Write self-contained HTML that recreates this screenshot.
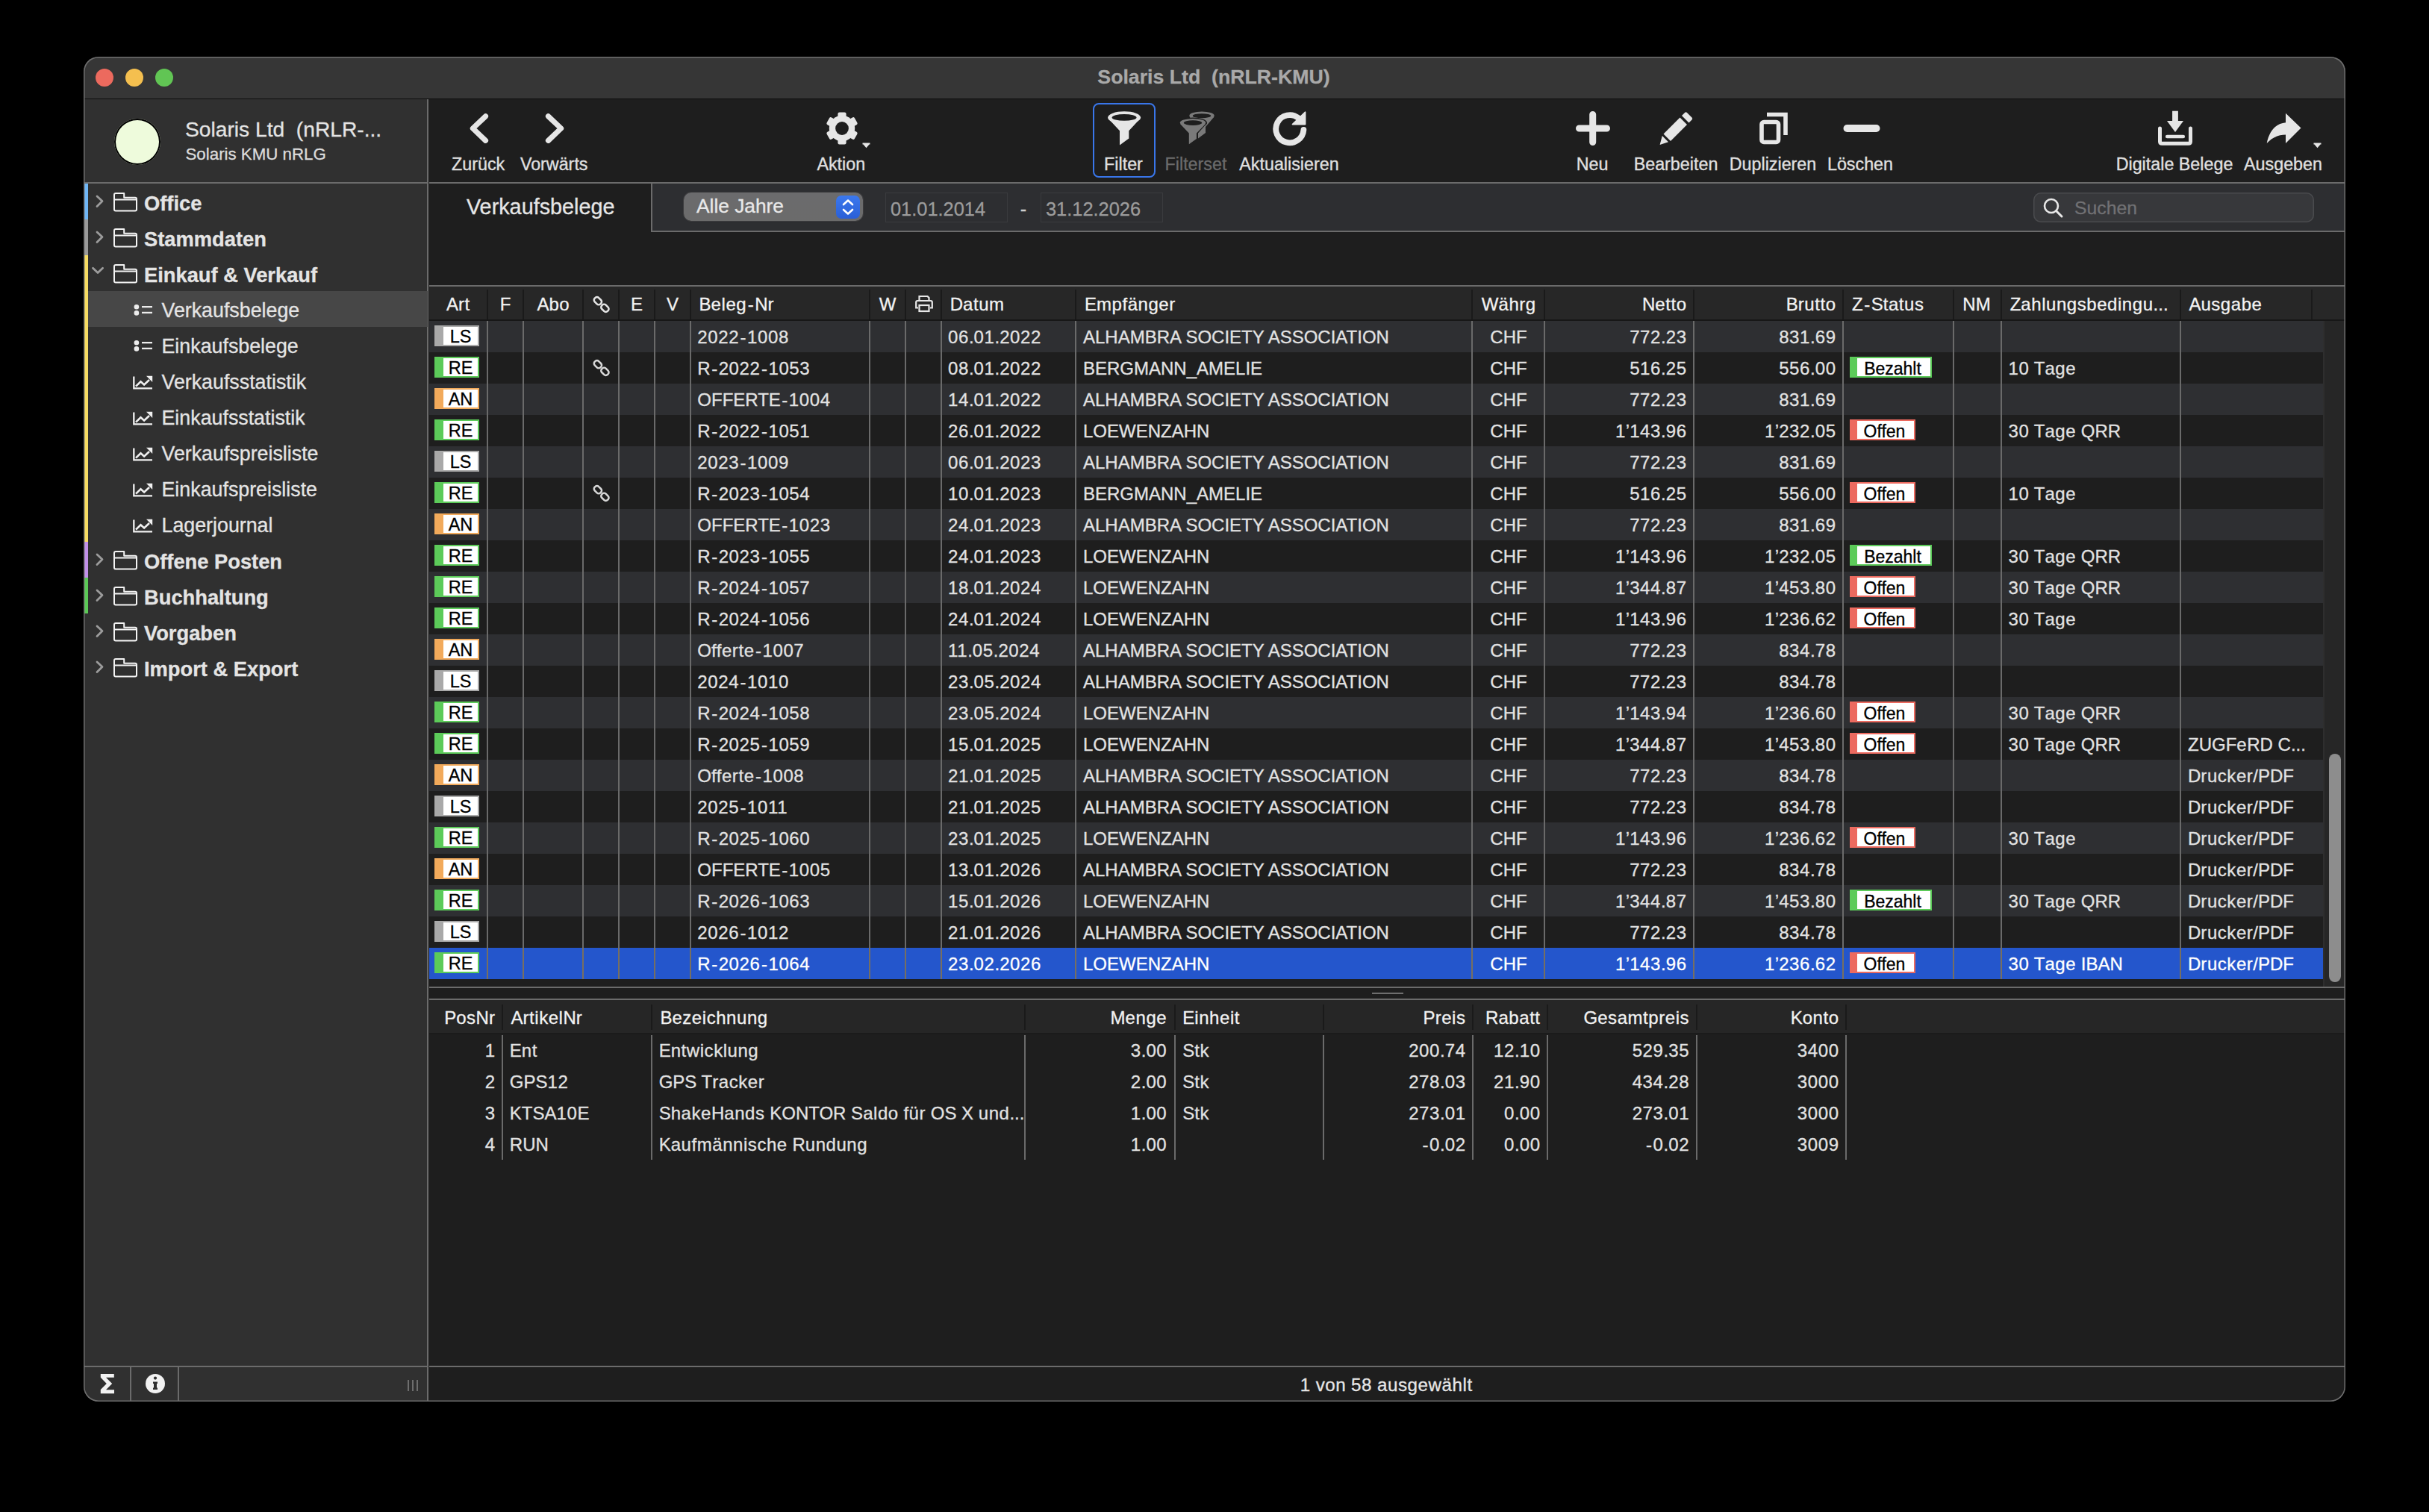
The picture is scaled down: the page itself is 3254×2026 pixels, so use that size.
<!DOCTYPE html><html><head><meta charset="utf-8"><title>Solaris Ltd (nRLR-KMU)</title><style>
html,body{margin:0;padding:0;background:#000;width:3254px;height:2026px;overflow:hidden}
body{position:relative;font-family:"Liberation Sans",sans-serif}
.r{position:absolute}
.t{position:absolute;white-space:nowrap;line-height:1;-webkit-text-stroke:0.3px currentColor}
</style></head><body>
<div class="r" style="left:112px;top:76px;width:3030px;height:1802px;background:#1e1e1e;border-radius:20px;overflow:hidden;"></div>
<div class="r" style="left:112px;top:76px;width:3030px;height:56px;background:#363636;border-radius:20px 20px 0 0;"></div>
<div class="r" style="left:128px;top:92px;width:24px;height:24px;background:#ec6a5e;border-radius:50%;"></div>
<div class="r" style="left:168px;top:92px;width:24px;height:24px;background:#f4bf4f;border-radius:50%;"></div>
<div class="r" style="left:208px;top:92px;width:24px;height:24px;background:#61c554;border-radius:50%;"></div>
<div class="t" style="left:126.0px;width:3000px;text-align:center;top:89.6px;font-size:26.7px;font-weight:700;color:#a9a9a9;">Solaris Ltd&nbsp; (nRLR-KMU)</div>
<div class="r" style="left:112px;top:132px;width:461px;height:1746px;background:#303030;border-radius:0 0 0 20px;"></div>
<div class="r" style="left:572px;top:132px;width:2px;height:1746px;background:#6b6b6b;"></div>
<div class="r" style="left:152.7px;top:158.5px;width:62.70000000000002px;height:62.69999999999999px;background:#eefbdc;border-radius:50%;box-shadow:0 0 0 2px #000 inset;"></div>
<div class="t" style="left:248.0px;top:158.7px;font-size:28.2px;font-weight:400;color:#e3e3e3;">Solaris Ltd&nbsp; (nRLR-...</div>
<div class="t" style="left:248.5px;top:196.1px;font-size:22.3px;font-weight:400;color:#dcdcdc;">Solaris KMU nRLG</div>
<div class="r" style="left:112px;top:244px;width:461px;height:2px;background:#6b6b6b;"></div>
<div class="r" style="left:112px;top:246px;width:6px;height:48px;background:#6fb6f6;"></div>
<div class="r" style="left:112px;top:294px;width:6px;height:48px;background:#9a9a9a;"></div>
<div class="r" style="left:112px;top:342px;width:6px;height:384px;background:#f7dc62;"></div>
<div class="r" style="left:112px;top:726px;width:6px;height:48px;background:#c190e8;"></div>
<div class="r" style="left:112px;top:774px;width:6px;height:48px;background:#5bc856;"></div>
<div class="r" style="left:118px;top:390px;width:455px;height:48px;background:#474747;"></div>
<svg class="r" style="left:125px;top:260px" width="18" height="22" viewBox="0 0 18 22"><path d="M5 3 L12 9.6 L5 16.4" fill="none" stroke="#9c9c9c" stroke-width="2.8" stroke-linecap="round" stroke-linejoin="round"/></svg>
<svg class="r" style="left:151px;top:257px" width="34" height="28" viewBox="0 0 34 28"><path d="M2 4 Q2 2 4 2 H15.2 V7.8 H30 Q32 7.8 32 9.8 V23.5 Q32 25.5 30 25.5 H4 Q2 25.5 2 23.5 Z M2 10.4 H32" fill="none" stroke="#f4f4f4" stroke-width="2" stroke-linejoin="round"/></svg>
<div class="t" style="left:193.0px;top:258.9px;font-size:27.3px;font-weight:700;color:#e4e4e4;">Office</div>
<svg class="r" style="left:125px;top:308px" width="18" height="22" viewBox="0 0 18 22"><path d="M5 3 L12 9.6 L5 16.4" fill="none" stroke="#9c9c9c" stroke-width="2.8" stroke-linecap="round" stroke-linejoin="round"/></svg>
<svg class="r" style="left:151px;top:305px" width="34" height="28" viewBox="0 0 34 28"><path d="M2 4 Q2 2 4 2 H15.2 V7.8 H30 Q32 7.8 32 9.8 V23.5 Q32 25.5 30 25.5 H4 Q2 25.5 2 23.5 Z M2 10.4 H32" fill="none" stroke="#f4f4f4" stroke-width="2" stroke-linejoin="round"/></svg>
<div class="t" style="left:193.0px;top:306.9px;font-size:27.3px;font-weight:700;color:#e4e4e4;">Stammdaten</div>
<svg class="r" style="left:121px;top:356px" width="20" height="20" viewBox="0 0 20 20"><path d="M3.5 3.2 L10 9.6 L16.6 3.2" fill="none" stroke="#9c9c9c" stroke-width="2.8" stroke-linecap="round" stroke-linejoin="round"/></svg>
<svg class="r" style="left:151px;top:353px" width="34" height="28" viewBox="0 0 34 28"><path d="M2 4 Q2 2 4 2 H15.2 V7.8 H30 Q32 7.8 32 9.8 V23.5 Q32 25.5 30 25.5 H4 Q2 25.5 2 23.5 Z M2 10.4 H32" fill="none" stroke="#f4f4f4" stroke-width="2" stroke-linejoin="round"/></svg>
<div class="t" style="left:193.0px;top:354.9px;font-size:27.3px;font-weight:700;color:#e4e4e4;">Einkauf &amp; Verkauf</div>
<svg class="r" style="left:178px;top:405px" width="28" height="20" viewBox="0 0 28 20"><circle cx="4.9" cy="6.3" r="3.3" fill="#ececec"/><circle cx="4.9" cy="14.4" r="3.3" fill="#ececec"/><rect x="12" y="5" width="14" height="2.3" fill="#ececec"/><rect x="12" y="12.8" width="14" height="2.3" fill="#ececec"/></svg>
<div class="t" style="left:216.5px;top:403.1px;font-size:26.8px;font-weight:400;color:#e4e4e4;">Verkaufsbelege</div>
<svg class="r" style="left:178px;top:453px" width="28" height="20" viewBox="0 0 28 20"><circle cx="4.9" cy="6.3" r="3.3" fill="#ececec"/><circle cx="4.9" cy="14.4" r="3.3" fill="#ececec"/><rect x="12" y="5" width="14" height="2.3" fill="#ececec"/><rect x="12" y="12.8" width="14" height="2.3" fill="#ececec"/></svg>
<div class="t" style="left:216.5px;top:451.1px;font-size:26.8px;font-weight:400;color:#e4e4e4;">Einkaufsbelege</div>
<svg class="r" style="left:177px;top:500px" width="30" height="24" viewBox="0 0 30 24"><path d="M2.3 4.4 V20.3 H27" fill="none" stroke="#f0f0f0" stroke-width="2.3"/><path d="M5 17.6 L11.5 11.3 L16.1 15.5 L23 9" fill="none" stroke="#f0f0f0" stroke-width="2.6"/><path d="M19 3.8 H27.2 V12 Z" fill="#f0f0f0"/></svg>
<div class="t" style="left:216.5px;top:499.1px;font-size:26.8px;font-weight:400;color:#e4e4e4;">Verkaufsstatistik</div>
<svg class="r" style="left:177px;top:548px" width="30" height="24" viewBox="0 0 30 24"><path d="M2.3 4.4 V20.3 H27" fill="none" stroke="#f0f0f0" stroke-width="2.3"/><path d="M5 17.6 L11.5 11.3 L16.1 15.5 L23 9" fill="none" stroke="#f0f0f0" stroke-width="2.6"/><path d="M19 3.8 H27.2 V12 Z" fill="#f0f0f0"/></svg>
<div class="t" style="left:216.5px;top:547.1px;font-size:26.8px;font-weight:400;color:#e4e4e4;">Einkaufsstatistik</div>
<svg class="r" style="left:177px;top:596px" width="30" height="24" viewBox="0 0 30 24"><path d="M2.3 4.4 V20.3 H27" fill="none" stroke="#f0f0f0" stroke-width="2.3"/><path d="M5 17.6 L11.5 11.3 L16.1 15.5 L23 9" fill="none" stroke="#f0f0f0" stroke-width="2.6"/><path d="M19 3.8 H27.2 V12 Z" fill="#f0f0f0"/></svg>
<div class="t" style="left:216.5px;top:595.1px;font-size:26.8px;font-weight:400;color:#e4e4e4;">Verkaufspreisliste</div>
<svg class="r" style="left:177px;top:644px" width="30" height="24" viewBox="0 0 30 24"><path d="M2.3 4.4 V20.3 H27" fill="none" stroke="#f0f0f0" stroke-width="2.3"/><path d="M5 17.6 L11.5 11.3 L16.1 15.5 L23 9" fill="none" stroke="#f0f0f0" stroke-width="2.6"/><path d="M19 3.8 H27.2 V12 Z" fill="#f0f0f0"/></svg>
<div class="t" style="left:216.5px;top:643.1px;font-size:26.8px;font-weight:400;color:#e4e4e4;">Einkaufspreisliste</div>
<svg class="r" style="left:177px;top:692px" width="30" height="24" viewBox="0 0 30 24"><path d="M2.3 4.4 V20.3 H27" fill="none" stroke="#f0f0f0" stroke-width="2.3"/><path d="M5 17.6 L11.5 11.3 L16.1 15.5 L23 9" fill="none" stroke="#f0f0f0" stroke-width="2.6"/><path d="M19 3.8 H27.2 V12 Z" fill="#f0f0f0"/></svg>
<div class="t" style="left:216.5px;top:691.1px;font-size:26.8px;font-weight:400;color:#e4e4e4;">Lagerjournal</div>
<svg class="r" style="left:125px;top:740px" width="18" height="22" viewBox="0 0 18 22"><path d="M5 3 L12 9.6 L5 16.4" fill="none" stroke="#9c9c9c" stroke-width="2.8" stroke-linecap="round" stroke-linejoin="round"/></svg>
<svg class="r" style="left:151px;top:737px" width="34" height="28" viewBox="0 0 34 28"><path d="M2 4 Q2 2 4 2 H15.2 V7.8 H30 Q32 7.8 32 9.8 V23.5 Q32 25.5 30 25.5 H4 Q2 25.5 2 23.5 Z M2 10.4 H32" fill="none" stroke="#f4f4f4" stroke-width="2" stroke-linejoin="round"/></svg>
<div class="t" style="left:193.0px;top:738.9px;font-size:27.3px;font-weight:700;color:#e4e4e4;">Offene Posten</div>
<svg class="r" style="left:125px;top:788px" width="18" height="22" viewBox="0 0 18 22"><path d="M5 3 L12 9.6 L5 16.4" fill="none" stroke="#9c9c9c" stroke-width="2.8" stroke-linecap="round" stroke-linejoin="round"/></svg>
<svg class="r" style="left:151px;top:785px" width="34" height="28" viewBox="0 0 34 28"><path d="M2 4 Q2 2 4 2 H15.2 V7.8 H30 Q32 7.8 32 9.8 V23.5 Q32 25.5 30 25.5 H4 Q2 25.5 2 23.5 Z M2 10.4 H32" fill="none" stroke="#f4f4f4" stroke-width="2" stroke-linejoin="round"/></svg>
<div class="t" style="left:193.0px;top:786.9px;font-size:27.3px;font-weight:700;color:#e4e4e4;">Buchhaltung</div>
<svg class="r" style="left:125px;top:836px" width="18" height="22" viewBox="0 0 18 22"><path d="M5 3 L12 9.6 L5 16.4" fill="none" stroke="#9c9c9c" stroke-width="2.8" stroke-linecap="round" stroke-linejoin="round"/></svg>
<svg class="r" style="left:151px;top:833px" width="34" height="28" viewBox="0 0 34 28"><path d="M2 4 Q2 2 4 2 H15.2 V7.8 H30 Q32 7.8 32 9.8 V23.5 Q32 25.5 30 25.5 H4 Q2 25.5 2 23.5 Z M2 10.4 H32" fill="none" stroke="#f4f4f4" stroke-width="2" stroke-linejoin="round"/></svg>
<div class="t" style="left:193.0px;top:834.9px;font-size:27.3px;font-weight:700;color:#e4e4e4;">Vorgaben</div>
<svg class="r" style="left:125px;top:884px" width="18" height="22" viewBox="0 0 18 22"><path d="M5 3 L12 9.6 L5 16.4" fill="none" stroke="#9c9c9c" stroke-width="2.8" stroke-linecap="round" stroke-linejoin="round"/></svg>
<svg class="r" style="left:151px;top:881px" width="34" height="28" viewBox="0 0 34 28"><path d="M2 4 Q2 2 4 2 H15.2 V7.8 H30 Q32 7.8 32 9.8 V23.5 Q32 25.5 30 25.5 H4 Q2 25.5 2 23.5 Z M2 10.4 H32" fill="none" stroke="#f4f4f4" stroke-width="2" stroke-linejoin="round"/></svg>
<div class="t" style="left:193.0px;top:882.9px;font-size:27.3px;font-weight:700;color:#e4e4e4;">Import &amp; Export</div>
<div class="r" style="left:112px;top:1830px;width:461px;height:2px;background:#6b6b6b;"></div>
<div class="r" style="left:174px;top:1832px;width:2px;height:46px;background:#6b6b6b;"></div>
<div class="r" style="left:238px;top:1832px;width:2px;height:46px;background:#6b6b6b;"></div>
<svg class="r" style="left:134px;top:1840px" width="21" height="28" viewBox="0 0 21 28"><path d="M0.8 0.9 H18.8 V5.8 H8 L16.2 14 L8 22.3 H19 V27.2 H0.8 V22 L8.8 14 L0.8 5.8 Z" fill="#f2f2f2"/></svg>
<svg class="r" style="left:195px;top:1841px" width="26" height="26" viewBox="0 0 26 26"><circle cx="13" cy="13" r="13" fill="#f2f2f2"/><circle cx="13" cy="5.6" r="2.1" fill="#303030"/><path d="M10 10.5 H16 V13 H15 V18.6 H16 V21 H10 V18.6 H11 V13 H10 Z" fill="#303030"/></svg>
<div class="r" style="left:546px;top:1849px;width:2px;height:15px;background:#6e6e6e;"></div>
<div class="r" style="left:552px;top:1849px;width:2px;height:15px;background:#6e6e6e;"></div>
<div class="r" style="left:558px;top:1849px;width:2px;height:15px;background:#6e6e6e;"></div>
<div class="r" style="left:574px;top:132px;width:2568px;height:112px;background:#1e1e1e;"></div>
<div class="r" style="left:575px;top:244px;width:2567px;height:2px;background:#6b6b6b;"></div>
<svg class="r" style="left:626px;top:150px" width="32" height="44" viewBox="0 0 32 44"><path d="M24.5 5.8 L7.4 22 L24.5 38.3" fill="none" stroke="#e6e6e6" stroke-width="7.2" stroke-linecap="round" stroke-linejoin="round"/></svg>
<div class="t" style="left:-859.4px;width:3000px;text-align:center;top:208.7px;font-size:23.3px;font-weight:400;color:#e0e0e0;">Zurück</div>
<svg class="r" style="left:727px;top:150px" width="32" height="44" viewBox="0 0 32 44"><path d="M7.5 5.8 L24.6 22 L7.5 38.3" fill="none" stroke="#e6e6e6" stroke-width="7.2" stroke-linecap="round" stroke-linejoin="round"/></svg>
<div class="t" style="left:-757.8px;width:3000px;text-align:center;top:208.7px;font-size:23.3px;font-weight:400;color:#e0e0e0;">Vorwärts</div>
<svg class="r" style="left:1106px;top:150px" width="44" height="46" viewBox="0 0 44 46"><g fill="#e6e6e6"><rect x="16.4" y="0.5" width="11.2" height="12" rx="2.2" transform="rotate(0 22 22)"/><rect x="16.4" y="0.5" width="11.2" height="12" rx="2.2" transform="rotate(60 22 22)"/><rect x="16.4" y="0.5" width="11.2" height="12" rx="2.2" transform="rotate(120 22 22)"/><rect x="16.4" y="0.5" width="11.2" height="12" rx="2.2" transform="rotate(180 22 22)"/><rect x="16.4" y="0.5" width="11.2" height="12" rx="2.2" transform="rotate(240 22 22)"/><rect x="16.4" y="0.5" width="11.2" height="12" rx="2.2" transform="rotate(300 22 22)"/><circle cx="22" cy="22" r="17.2"/></g><circle cx="22" cy="22" r="8.9" fill="#1e1e1e"/></svg>
<svg class="r" style="left:1155px;top:191px" width="12" height="8" viewBox="0 0 12 8"><path d="M0.5 0.5 H10.5 V2.6 H0.5 Z M1.5 2.6 H9.5 L5.5 7.2 Z" fill="#e6e6e6"/></svg>
<div class="t" style="left:-373.2px;width:3000px;text-align:center;top:208.7px;font-size:23.3px;font-weight:400;color:#e0e0e0;">Aktion</div>
<div class="r" style="left:1464px;top:138px;width:84px;height:100px;background:transparent;border:2.5px solid #3976ea;border-radius:8px;box-sizing:border-box;"></div>
<svg class="r" style="left:1484px;top:148px" width="46" height="48" viewBox="0 0 46 48"><g fill="#e6e6e6"><ellipse cx="22.1" cy="9.6" rx="22" ry="8.4"/><path d="M0.8 11 L43.4 11 L28.3 27.3 V37.6 L16 46.6 V27.3 Z"/></g><ellipse cx="22.1" cy="9.4" rx="16.4" ry="4.4" fill="#1e1e1e"/></svg>
<div class="t" style="left:5.0px;width:3000px;text-align:center;top:208.7px;font-size:23.3px;font-weight:400;color:#e0e0e0;">Filter</div>
<svg class="r" style="left:1580px;top:149px" width="48" height="48" viewBox="0 0 48 48"><g fill="#7a7a7a"><ellipse cx="30" cy="6" rx="16.7" ry="5.6"/><path d="M13.5 7.5 H46.5 L35 21 V29 L25 36.5 V21 Z"/></g><ellipse cx="30" cy="6.2" rx="12.2" ry="3" fill="#1e1e1e"/><g fill="#1e1e1e"><ellipse cx="18" cy="15.4" rx="19" ry="7"/><path d="M-1 16 H37 L24.5 30 V46 L11 48 V30 Z"/></g><g fill="#7a7a7a"><ellipse cx="18" cy="15.4" rx="17.2" ry="5.4"/><path d="M1 17 H35 L22.9 29.5 V37 L12.8 44.3 V29.5 Z"/></g><ellipse cx="18" cy="15.6" rx="12.2" ry="3.3" fill="#1e1e1e"/></svg>
<div class="t" style="left:102.0px;width:3000px;text-align:center;top:208.7px;font-size:23.3px;font-weight:400;color:#6b6b6b;">Filterset</div>
<svg class="r" style="left:1704px;top:148px" width="48" height="48" viewBox="0 0 48 48"><path d="M42.4 26 A18.6 18.6 0 1 1 35.6 10.3" fill="none" stroke="#e6e6e6" stroke-width="7.8" stroke-linecap="round"/><path d="M44.6 2.2 V18.6 H27.4 Z" fill="#e6e6e6" stroke="#e6e6e6" stroke-width="1.6" stroke-linejoin="round"/></svg>
<div class="t" style="left:227.0px;width:3000px;text-align:center;top:208.7px;font-size:23.3px;font-weight:400;color:#e0e0e0;">Aktualisieren</div>
<svg class="r" style="left:2110px;top:148px" width="48" height="48" viewBox="0 0 48 48"><path d="M23.7 5.5 V42.5 M5.5 24 H42.5" stroke="#e6e6e6" stroke-width="9" stroke-linecap="round"/></svg>
<div class="t" style="left:633.0px;width:3000px;text-align:center;top:208.7px;font-size:23.3px;font-weight:400;color:#e0e0e0;">Neu</div>
<svg class="r" style="left:2222px;top:148px" width="48" height="48" viewBox="0 0 48 48"><path d="M35 3 Q36.5 1.5 38 3 L44.5 9.5 Q46 11 44.5 12.5 L40.5 16.5 L31 7 Z" fill="#e6e6e6"/><path d="M28.5 9.5 L38 19 L16 41 L6.5 31.5 Z" fill="#e6e6e6"/><path d="M1.6 46 L4.8 34 L13 42.2 Z" fill="#e6e6e6"/></svg>
<div class="t" style="left:745.0px;width:3000px;text-align:center;top:208.7px;font-size:23.3px;font-weight:400;color:#e0e0e0;">Bearbeiten</div>
<svg class="r" style="left:2356px;top:150px" width="42" height="44" viewBox="0 0 42 44"><rect x="4" y="13.5" width="22.5" height="27" rx="3" fill="none" stroke="#e6e6e6" stroke-width="5.6"/><path d="M11 3.5 H36 V31" fill="none" stroke="#e6e6e6" stroke-width="5.6"/></svg>
<div class="t" style="left:875.0px;width:3000px;text-align:center;top:208.7px;font-size:23.3px;font-weight:400;color:#e0e0e0;">Duplizieren</div>
<svg class="r" style="left:2468px;top:166px" width="52" height="12" viewBox="0 0 52 12"><path d="M6.5 6 H45.5" stroke="#e6e6e6" stroke-width="10" stroke-linecap="round"/></svg>
<div class="t" style="left:992.0px;width:3000px;text-align:center;top:208.7px;font-size:23.3px;font-weight:400;color:#e0e0e0;">Löschen</div>
<svg class="r" style="left:2889px;top:147px" width="50" height="50" viewBox="0 0 50 50"><rect x="21.1" y="1.7" width="7.8" height="15" fill="#e6e6e6"/><path d="M14 15 H36 L25 30 Z" fill="#e6e6e6"/><path d="M4.5 25 V42.5 Q4.5 45.3 7.3 45.3 H42.7 Q45.5 45.3 45.5 42.5 V25" fill="none" stroke="#e6e6e6" stroke-width="5" stroke-linecap="round" stroke-linejoin="round"/><path d="M14.2 36 H35.8" stroke="#e6e6e6" stroke-width="4.6" stroke-linecap="round"/></svg>
<div class="t" style="left:1413.0px;width:3000px;text-align:center;top:208.7px;font-size:23.3px;font-weight:400;color:#e0e0e0;">Digitale Belege</div>
<svg class="r" style="left:3035px;top:150px" width="50" height="44" viewBox="0 0 50 44"><path d="M27 1.8 L47.5 21.5 L27 42 V30.6 C16 30.6 8 35 1.7 42 C5 25 14 15.5 27 14.2 Z" fill="#e6e6e6"/></svg>
<svg class="r" style="left:3099px;top:191px" width="12" height="8" viewBox="0 0 12 8"><path d="M0.5 0.5 H10.5 V2.6 H0.5 Z M1.5 2.6 H9.5 L5.5 7.2 Z" fill="#e6e6e6"/></svg>
<div class="t" style="left:1558.5px;width:3000px;text-align:center;top:208.7px;font-size:23.3px;font-weight:400;color:#e0e0e0;">Ausgeben</div>
<div class="r" style="left:575px;top:246px;width:298px;height:65px;background:#1e1e1e;"></div>
<div class="t" style="left:625.0px;top:263.4px;font-size:28.8px;font-weight:400;color:#e6e6e6;">Verkaufsbelege</div>
<div class="r" style="left:873px;top:246px;width:2269px;height:65px;background:#2d2e31;"></div>
<div class="r" style="left:872px;top:246px;width:2px;height:65px;background:#6b6b6b;"></div>
<div class="r" style="left:872px;top:309px;width:2270px;height:2px;background:#6b6b6b;"></div>
<div class="r" style="left:916px;top:258px;width:240px;height:38px;background:linear-gradient(#6b6b6d,#6b6b6b);border-radius:10px;box-shadow:0 0 0 1px #3c3c3e,0 1px 1px rgba(0,0,0,.3);"></div>
<div class="r" style="left:1120px;top:262px;width:32px;height:31px;background:linear-gradient(#3b78ee,#2a5fd6);border-radius:7px;"></div>
<svg class="r" style="left:1120px;top:262px" width="32" height="31" viewBox="0 0 32 31"><path d="M10 12 L16 6.5 L22 12 M10 19 L16 24.5 L22 19" fill="none" stroke="#fff" stroke-width="2.6" stroke-linecap="round" stroke-linejoin="round"/></svg>
<div class="t" style="left:933.0px;top:262.7px;font-size:26.3px;font-weight:400;color:#e8e8e8;">Alle Jahre</div>
<div class="r" style="left:1186px;top:258px;width:164px;height:40px;background:transparent;box-shadow:0 0 0 1px #3a3b3e inset;"></div>
<div class="t" style="left:1193.0px;top:268.0px;font-size:25.4px;font-weight:400;color:#9c9c9c;">01.01.2014</div>
<div class="t" style="left:-129.0px;width:3000px;text-align:center;top:268.0px;font-size:25.4px;font-weight:400;color:#d0d0d0;">-</div>
<div class="r" style="left:1394px;top:258px;width:164px;height:40px;background:transparent;box-shadow:0 0 0 1px #3a3b3e inset;"></div>
<div class="t" style="left:1401.0px;top:268.0px;font-size:25.4px;font-weight:400;color:#9c9c9c;">31.12.2026</div>
<div class="r" style="left:2724px;top:258px;width:376px;height:40px;background:#37383b;border-radius:10px;box-shadow:0 0 0 1.5px #4a4b4e inset;"></div>
<svg class="r" style="left:2736px;top:264px" width="30" height="30" viewBox="0 0 30 30"><circle cx="12" cy="12" r="9" fill="none" stroke="#e8e8e8" stroke-width="2.6"/><path d="M18.5 18.5 L26 26" stroke="#e8e8e8" stroke-width="3" stroke-linecap="round"/></svg>
<div class="t" style="left:2779.0px;top:267.2px;font-size:24.8px;font-weight:400;color:#717174;">Suchen</div>
<div class="r" style="left:575px;top:382px;width:2567px;height:2px;background:#6b6b6b;"></div>
<div class="r" style="left:575px;top:384px;width:2567px;height:45px;background:#272727;"></div>
<div class="r" style="left:575px;top:428px;width:2567px;height:2px;background:#171717;"></div>
<div class="r" style="left:652px;top:388px;width:2px;height:40px;background:#1a1a1a;"></div>
<div class="r" style="left:700px;top:388px;width:2px;height:40px;background:#1a1a1a;"></div>
<div class="r" style="left:780px;top:388px;width:2px;height:40px;background:#1a1a1a;"></div>
<div class="r" style="left:828px;top:388px;width:2px;height:40px;background:#1a1a1a;"></div>
<div class="r" style="left:876px;top:388px;width:2px;height:40px;background:#1a1a1a;"></div>
<div class="r" style="left:924px;top:388px;width:2px;height:40px;background:#1a1a1a;"></div>
<div class="r" style="left:1164px;top:388px;width:2px;height:40px;background:#1a1a1a;"></div>
<div class="r" style="left:1212px;top:388px;width:2px;height:40px;background:#1a1a1a;"></div>
<div class="r" style="left:1260px;top:388px;width:2px;height:40px;background:#1a1a1a;"></div>
<div class="r" style="left:1440px;top:388px;width:2px;height:40px;background:#1a1a1a;"></div>
<div class="r" style="left:1971px;top:388px;width:2px;height:40px;background:#1a1a1a;"></div>
<div class="r" style="left:2068px;top:388px;width:2px;height:40px;background:#1a1a1a;"></div>
<div class="r" style="left:2268px;top:388px;width:2px;height:40px;background:#1a1a1a;"></div>
<div class="r" style="left:2468px;top:388px;width:2px;height:40px;background:#1a1a1a;"></div>
<div class="r" style="left:2616px;top:388px;width:2px;height:40px;background:#1a1a1a;"></div>
<div class="r" style="left:2680px;top:388px;width:2px;height:40px;background:#1a1a1a;"></div>
<div class="r" style="left:2920px;top:388px;width:2px;height:40px;background:#1a1a1a;"></div>
<div class="r" style="left:3096px;top:388px;width:2px;height:40px;background:#1a1a1a;"></div>
<div class="t" style="left:-886.2px;width:3000px;text-align:center;top:395.7px;font-size:24px;font-weight:400;color:#f2f2f2;">A<span style="letter-spacing:0.55px">rt</span></div>
<div class="t" style="left:-823.0px;width:3000px;text-align:center;top:395.7px;font-size:24px;font-weight:400;color:#f2f2f2;">F</div>
<div class="t" style="left:-758.7px;width:3000px;text-align:center;top:395.7px;font-size:24px;font-weight:400;color:#f2f2f2;">A<span style="letter-spacing:0.55px">bo</span></div>
<svg class="r" style="left:794px;top:396px" width="24" height="24" viewBox="0 0 24 24"><g fill="none" stroke="#e6e6e6" stroke-width="2.5"><rect x="3.1" y="1.8" width="7.6" height="10.8" rx="3.3" transform="rotate(-45 6.9 7.2)"/><rect x="12.6" y="11.4" width="7.6" height="10.8" rx="3.3" transform="rotate(-45 16.4 16.8)"/></g></svg>
<div class="t" style="left:-647.0px;width:3000px;text-align:center;top:395.7px;font-size:24px;font-weight:400;color:#f2f2f2;">E</div>
<div class="t" style="left:-599.0px;width:3000px;text-align:center;top:395.7px;font-size:24px;font-weight:400;color:#f2f2f2;">V</div>
<div class="t" style="left:936.6px;top:395.7px;font-size:24px;font-weight:400;color:#f2f2f2;">B<span style="letter-spacing:0.55px">eleg</span><span style="margin:0 1.5px">-</span>N<span style="letter-spacing:0.55px">r</span></div>
<div class="t" style="left:-311.0px;width:3000px;text-align:center;top:395.7px;font-size:24px;font-weight:400;color:#f2f2f2;">W</div>
<svg class="r" style="left:1225px;top:395px" width="26" height="24" viewBox="0 0 26 24"><path d="M6.5 7.5 V2 H17.5 L19.5 4 V7.5" fill="none" stroke="#e8e8e8" stroke-width="2.2"/><path d="M5 17.5 H2.2 V10 Q2.2 8 4.2 8 H21.8 Q23.8 8 23.8 10 V17.5 H21" fill="none" stroke="#e8e8e8" stroke-width="2.2"/><rect x="6.5" y="14" width="13" height="8" fill="none" stroke="#e8e8e8" stroke-width="2.2"/></svg>
<div class="t" style="left:1272.7px;top:395.7px;font-size:24px;font-weight:400;color:#f2f2f2;">D<span style="letter-spacing:0.55px">atum</span></div>
<div class="t" style="left:1453.0px;top:395.7px;font-size:24px;font-weight:400;color:#f2f2f2;">E<span style="letter-spacing:0.55px">mpfänger</span></div>
<div class="t" style="left:521.3px;width:3000px;text-align:center;top:395.7px;font-size:24px;font-weight:400;color:#f2f2f2;">W<span style="letter-spacing:0.55px">ährg</span></div>
<div class="t" style="left:759.6px;width:1500px;text-align:right;top:395.7px;font-size:24px;font-weight:400;color:#f2f2f2;">N<span style="letter-spacing:0.55px">etto</span></div>
<div class="t" style="left:959.6px;width:1500px;text-align:right;top:395.7px;font-size:24px;font-weight:400;color:#f2f2f2;">B<span style="letter-spacing:0.55px">rutto</span></div>
<div class="t" style="left:2481.0px;top:395.7px;font-size:24px;font-weight:400;color:#f2f2f2;">Z<span style="margin:0 1.5px">-</span>S<span style="letter-spacing:0.55px">tatus</span></div>
<div class="t" style="left:1148.0px;width:3000px;text-align:center;top:395.7px;font-size:24px;font-weight:400;color:#f2f2f2;">NM</div>
<div class="t" style="left:2692.7px;top:395.7px;font-size:24px;font-weight:400;color:#f2f2f2;">Z<span style="letter-spacing:0.55px">ahlungsbedingu</span>...</div>
<div class="t" style="left:2932.4px;top:395.7px;font-size:24px;font-weight:400;color:#f2f2f2;">A<span style="letter-spacing:0.55px">usgabe</span></div>
<div class="r" style="left:575px;top:430px;width:2537px;height:42px;background:#2e2f32;"></div>
<div class="r" style="left:652px;top:430px;width:2px;height:42px;background:#6a6a6a;"></div>
<div class="r" style="left:700px;top:430px;width:2px;height:42px;background:#6a6a6a;"></div>
<div class="r" style="left:780px;top:430px;width:2px;height:42px;background:#6a6a6a;"></div>
<div class="r" style="left:828px;top:430px;width:2px;height:42px;background:#6a6a6a;"></div>
<div class="r" style="left:876px;top:430px;width:2px;height:42px;background:#6a6a6a;"></div>
<div class="r" style="left:924px;top:430px;width:2px;height:42px;background:#6a6a6a;"></div>
<div class="r" style="left:1164px;top:430px;width:2px;height:42px;background:#6a6a6a;"></div>
<div class="r" style="left:1212px;top:430px;width:2px;height:42px;background:#6a6a6a;"></div>
<div class="r" style="left:1260px;top:430px;width:2px;height:42px;background:#6a6a6a;"></div>
<div class="r" style="left:1440px;top:430px;width:2px;height:42px;background:#6a6a6a;"></div>
<div class="r" style="left:1971px;top:430px;width:2px;height:42px;background:#6a6a6a;"></div>
<div class="r" style="left:2068px;top:430px;width:2px;height:42px;background:#6a6a6a;"></div>
<div class="r" style="left:2268px;top:430px;width:2px;height:42px;background:#6a6a6a;"></div>
<div class="r" style="left:2468px;top:430px;width:2px;height:42px;background:#6a6a6a;"></div>
<div class="r" style="left:2616px;top:430px;width:2px;height:42px;background:#6a6a6a;"></div>
<div class="r" style="left:2680px;top:430px;width:2px;height:42px;background:#6a6a6a;"></div>
<div class="r" style="left:2920px;top:430px;width:2px;height:42px;background:#6a6a6a;"></div>
<div class="r" style="left:582px;top:436px;width:60px;height:28px;background:#fff;box-shadow:0 0 0 2px #a9a9a9 inset;"></div>
<div class="r" style="left:582px;top:436px;width:12px;height:28px;background:#a9a9a9;"></div>
<div class="t" style="left:-883.0px;width:3000px;text-align:center;top:440.3px;font-size:23.5px;font-weight:400;color:#000;">LS</div>
<div class="t" style="left:934.3px;top:439.9px;font-size:24.0px;font-weight:400;color:#e2e2e2;"><span style="letter-spacing:0.6px">2022</span><span style="margin:0 1.5px">-</span><span style="letter-spacing:0.6px">1008</span></div>
<div class="t" style="left:1270.0px;top:439.9px;font-size:24.0px;font-weight:400;color:#e2e2e2;"><span style="letter-spacing:0.6px">06</span>.<span style="letter-spacing:0.6px">01</span>.<span style="letter-spacing:0.6px">2022</span></div>
<div class="t" style="left:1451.0px;top:439.9px;font-size:24.0px;font-weight:400;color:#e2e2e2;">ALHAMBRA SOCIETY ASSOCIATION</div>
<div class="t" style="left:521.0px;width:3000px;text-align:center;top:439.9px;font-size:24.0px;font-weight:400;color:#e2e2e2;">CHF</div>
<div class="t" style="left:759.6px;width:1500px;text-align:right;top:439.9px;font-size:24.0px;font-weight:400;color:#e2e2e2;"><span style="letter-spacing:0.6px">772</span>.<span style="letter-spacing:0.6px">23</span></div>
<div class="t" style="left:959.6px;width:1500px;text-align:right;top:439.9px;font-size:24.0px;font-weight:400;color:#e2e2e2;"><span style="letter-spacing:0.6px">831</span>.<span style="letter-spacing:0.6px">69</span></div>
<div class="r" style="left:575px;top:472px;width:2537px;height:42px;background:#1e1e1e;"></div>
<div class="r" style="left:652px;top:472px;width:2px;height:42px;background:#6a6a6a;"></div>
<div class="r" style="left:700px;top:472px;width:2px;height:42px;background:#6a6a6a;"></div>
<div class="r" style="left:780px;top:472px;width:2px;height:42px;background:#6a6a6a;"></div>
<div class="r" style="left:828px;top:472px;width:2px;height:42px;background:#6a6a6a;"></div>
<div class="r" style="left:876px;top:472px;width:2px;height:42px;background:#6a6a6a;"></div>
<div class="r" style="left:924px;top:472px;width:2px;height:42px;background:#6a6a6a;"></div>
<div class="r" style="left:1164px;top:472px;width:2px;height:42px;background:#6a6a6a;"></div>
<div class="r" style="left:1212px;top:472px;width:2px;height:42px;background:#6a6a6a;"></div>
<div class="r" style="left:1260px;top:472px;width:2px;height:42px;background:#6a6a6a;"></div>
<div class="r" style="left:1440px;top:472px;width:2px;height:42px;background:#6a6a6a;"></div>
<div class="r" style="left:1971px;top:472px;width:2px;height:42px;background:#6a6a6a;"></div>
<div class="r" style="left:2068px;top:472px;width:2px;height:42px;background:#6a6a6a;"></div>
<div class="r" style="left:2268px;top:472px;width:2px;height:42px;background:#6a6a6a;"></div>
<div class="r" style="left:2468px;top:472px;width:2px;height:42px;background:#6a6a6a;"></div>
<div class="r" style="left:2616px;top:472px;width:2px;height:42px;background:#6a6a6a;"></div>
<div class="r" style="left:2680px;top:472px;width:2px;height:42px;background:#6a6a6a;"></div>
<div class="r" style="left:2920px;top:472px;width:2px;height:42px;background:#6a6a6a;"></div>
<div class="r" style="left:582px;top:478px;width:60px;height:28px;background:#fff;box-shadow:0 0 0 2px #5ccb59 inset;"></div>
<div class="r" style="left:582px;top:478px;width:12px;height:28px;background:#5ccb59;"></div>
<div class="t" style="left:-883.0px;width:3000px;text-align:center;top:482.3px;font-size:23.5px;font-weight:400;color:#000;">RE</div>
<svg class="r" style="left:794px;top:481px" width="24" height="24" viewBox="0 0 24 24"><g fill="none" stroke="#d8d8d8" stroke-width="2.5"><rect x="3.1" y="1.8" width="7.6" height="10.8" rx="3.3" transform="rotate(-45 6.9 7.2)"/><rect x="12.6" y="11.4" width="7.6" height="10.8" rx="3.3" transform="rotate(-45 16.4 16.8)"/></g></svg>
<div class="t" style="left:934.3px;top:481.9px;font-size:24.0px;font-weight:400;color:#e2e2e2;">R<span style="margin:0 1.5px">-</span><span style="letter-spacing:0.6px">2022</span><span style="margin:0 1.5px">-</span><span style="letter-spacing:0.6px">1053</span></div>
<div class="t" style="left:1270.0px;top:481.9px;font-size:24.0px;font-weight:400;color:#e2e2e2;"><span style="letter-spacing:0.6px">08</span>.<span style="letter-spacing:0.6px">01</span>.<span style="letter-spacing:0.6px">2022</span></div>
<div class="t" style="left:1451.0px;top:481.9px;font-size:24.0px;font-weight:400;color:#e2e2e2;">BERGMANN_AMELIE</div>
<div class="t" style="left:521.0px;width:3000px;text-align:center;top:481.9px;font-size:24.0px;font-weight:400;color:#e2e2e2;">CHF</div>
<div class="t" style="left:759.6px;width:1500px;text-align:right;top:481.9px;font-size:24.0px;font-weight:400;color:#e2e2e2;"><span style="letter-spacing:0.6px">516</span>.<span style="letter-spacing:0.6px">25</span></div>
<div class="t" style="left:959.6px;width:1500px;text-align:right;top:481.9px;font-size:24.0px;font-weight:400;color:#e2e2e2;"><span style="letter-spacing:0.6px">556</span>.<span style="letter-spacing:0.6px">00</span></div>
<div class="r" style="left:2478px;top:478px;width:110px;height:28px;background:#fff;box-shadow:0 0 0 2px #5ccb59 inset;"></div>
<div class="r" style="left:2478px;top:478px;width:10px;height:28px;background:#5ccb59;"></div>
<div class="t" style="left:1035.5px;width:3000px;text-align:center;top:482.7px;font-size:23.0px;font-weight:400;color:#000;">Bezahlt</div>
<div class="t" style="left:2690.6px;top:481.9px;font-size:24.0px;font-weight:400;color:#e2e2e2;"><span style="letter-spacing:0.6px">10</span> T<span style="letter-spacing:0.55px">age</span></div>
<div class="r" style="left:575px;top:514px;width:2537px;height:42px;background:#2e2f32;"></div>
<div class="r" style="left:652px;top:514px;width:2px;height:42px;background:#6a6a6a;"></div>
<div class="r" style="left:700px;top:514px;width:2px;height:42px;background:#6a6a6a;"></div>
<div class="r" style="left:780px;top:514px;width:2px;height:42px;background:#6a6a6a;"></div>
<div class="r" style="left:828px;top:514px;width:2px;height:42px;background:#6a6a6a;"></div>
<div class="r" style="left:876px;top:514px;width:2px;height:42px;background:#6a6a6a;"></div>
<div class="r" style="left:924px;top:514px;width:2px;height:42px;background:#6a6a6a;"></div>
<div class="r" style="left:1164px;top:514px;width:2px;height:42px;background:#6a6a6a;"></div>
<div class="r" style="left:1212px;top:514px;width:2px;height:42px;background:#6a6a6a;"></div>
<div class="r" style="left:1260px;top:514px;width:2px;height:42px;background:#6a6a6a;"></div>
<div class="r" style="left:1440px;top:514px;width:2px;height:42px;background:#6a6a6a;"></div>
<div class="r" style="left:1971px;top:514px;width:2px;height:42px;background:#6a6a6a;"></div>
<div class="r" style="left:2068px;top:514px;width:2px;height:42px;background:#6a6a6a;"></div>
<div class="r" style="left:2268px;top:514px;width:2px;height:42px;background:#6a6a6a;"></div>
<div class="r" style="left:2468px;top:514px;width:2px;height:42px;background:#6a6a6a;"></div>
<div class="r" style="left:2616px;top:514px;width:2px;height:42px;background:#6a6a6a;"></div>
<div class="r" style="left:2680px;top:514px;width:2px;height:42px;background:#6a6a6a;"></div>
<div class="r" style="left:2920px;top:514px;width:2px;height:42px;background:#6a6a6a;"></div>
<div class="r" style="left:582px;top:520px;width:60px;height:28px;background:#fff;box-shadow:0 0 0 2px #f2aa5b inset;"></div>
<div class="r" style="left:582px;top:520px;width:12px;height:28px;background:#f2aa5b;"></div>
<div class="t" style="left:-883.0px;width:3000px;text-align:center;top:524.3px;font-size:23.5px;font-weight:400;color:#000;">AN</div>
<div class="t" style="left:934.3px;top:523.9px;font-size:24.0px;font-weight:400;color:#e2e2e2;">OFFERTE<span style="margin:0 1.5px">-</span><span style="letter-spacing:0.6px">1004</span></div>
<div class="t" style="left:1270.0px;top:523.9px;font-size:24.0px;font-weight:400;color:#e2e2e2;"><span style="letter-spacing:0.6px">14</span>.<span style="letter-spacing:0.6px">01</span>.<span style="letter-spacing:0.6px">2022</span></div>
<div class="t" style="left:1451.0px;top:523.9px;font-size:24.0px;font-weight:400;color:#e2e2e2;">ALHAMBRA SOCIETY ASSOCIATION</div>
<div class="t" style="left:521.0px;width:3000px;text-align:center;top:523.9px;font-size:24.0px;font-weight:400;color:#e2e2e2;">CHF</div>
<div class="t" style="left:759.6px;width:1500px;text-align:right;top:523.9px;font-size:24.0px;font-weight:400;color:#e2e2e2;"><span style="letter-spacing:0.6px">772</span>.<span style="letter-spacing:0.6px">23</span></div>
<div class="t" style="left:959.6px;width:1500px;text-align:right;top:523.9px;font-size:24.0px;font-weight:400;color:#e2e2e2;"><span style="letter-spacing:0.6px">831</span>.<span style="letter-spacing:0.6px">69</span></div>
<div class="r" style="left:575px;top:556px;width:2537px;height:42px;background:#1e1e1e;"></div>
<div class="r" style="left:652px;top:556px;width:2px;height:42px;background:#6a6a6a;"></div>
<div class="r" style="left:700px;top:556px;width:2px;height:42px;background:#6a6a6a;"></div>
<div class="r" style="left:780px;top:556px;width:2px;height:42px;background:#6a6a6a;"></div>
<div class="r" style="left:828px;top:556px;width:2px;height:42px;background:#6a6a6a;"></div>
<div class="r" style="left:876px;top:556px;width:2px;height:42px;background:#6a6a6a;"></div>
<div class="r" style="left:924px;top:556px;width:2px;height:42px;background:#6a6a6a;"></div>
<div class="r" style="left:1164px;top:556px;width:2px;height:42px;background:#6a6a6a;"></div>
<div class="r" style="left:1212px;top:556px;width:2px;height:42px;background:#6a6a6a;"></div>
<div class="r" style="left:1260px;top:556px;width:2px;height:42px;background:#6a6a6a;"></div>
<div class="r" style="left:1440px;top:556px;width:2px;height:42px;background:#6a6a6a;"></div>
<div class="r" style="left:1971px;top:556px;width:2px;height:42px;background:#6a6a6a;"></div>
<div class="r" style="left:2068px;top:556px;width:2px;height:42px;background:#6a6a6a;"></div>
<div class="r" style="left:2268px;top:556px;width:2px;height:42px;background:#6a6a6a;"></div>
<div class="r" style="left:2468px;top:556px;width:2px;height:42px;background:#6a6a6a;"></div>
<div class="r" style="left:2616px;top:556px;width:2px;height:42px;background:#6a6a6a;"></div>
<div class="r" style="left:2680px;top:556px;width:2px;height:42px;background:#6a6a6a;"></div>
<div class="r" style="left:2920px;top:556px;width:2px;height:42px;background:#6a6a6a;"></div>
<div class="r" style="left:582px;top:562px;width:60px;height:28px;background:#fff;box-shadow:0 0 0 2px #5ccb59 inset;"></div>
<div class="r" style="left:582px;top:562px;width:12px;height:28px;background:#5ccb59;"></div>
<div class="t" style="left:-883.0px;width:3000px;text-align:center;top:566.3px;font-size:23.5px;font-weight:400;color:#000;">RE</div>
<div class="t" style="left:934.3px;top:565.9px;font-size:24.0px;font-weight:400;color:#e2e2e2;">R<span style="margin:0 1.5px">-</span><span style="letter-spacing:0.6px">2022</span><span style="margin:0 1.5px">-</span><span style="letter-spacing:0.6px">1051</span></div>
<div class="t" style="left:1270.0px;top:565.9px;font-size:24.0px;font-weight:400;color:#e2e2e2;"><span style="letter-spacing:0.6px">26</span>.<span style="letter-spacing:0.6px">01</span>.<span style="letter-spacing:0.6px">2022</span></div>
<div class="t" style="left:1451.0px;top:565.9px;font-size:24.0px;font-weight:400;color:#e2e2e2;">LOEWENZAHN</div>
<div class="t" style="left:521.0px;width:3000px;text-align:center;top:565.9px;font-size:24.0px;font-weight:400;color:#e2e2e2;">CHF</div>
<div class="t" style="left:759.6px;width:1500px;text-align:right;top:565.9px;font-size:24.0px;font-weight:400;color:#e2e2e2;"><span style="letter-spacing:0.6px">1</span>’<span style="letter-spacing:0.6px">143</span>.<span style="letter-spacing:0.6px">96</span></div>
<div class="t" style="left:959.6px;width:1500px;text-align:right;top:565.9px;font-size:24.0px;font-weight:400;color:#e2e2e2;"><span style="letter-spacing:0.6px">1</span>’<span style="letter-spacing:0.6px">232</span>.<span style="letter-spacing:0.6px">05</span></div>
<div class="r" style="left:2478px;top:562px;width:88px;height:28px;background:#fff;box-shadow:0 0 0 2px #ec6a5f inset;"></div>
<div class="r" style="left:2478px;top:562px;width:10px;height:28px;background:#ec6a5f;"></div>
<div class="t" style="left:1024.5px;width:3000px;text-align:center;top:566.7px;font-size:23.0px;font-weight:400;color:#000;">Offen</div>
<div class="t" style="left:2690.6px;top:565.9px;font-size:24.0px;font-weight:400;color:#e2e2e2;"><span style="letter-spacing:0.6px">30</span> T<span style="letter-spacing:0.55px">age</span> QRR</div>
<div class="r" style="left:575px;top:598px;width:2537px;height:42px;background:#2e2f32;"></div>
<div class="r" style="left:652px;top:598px;width:2px;height:42px;background:#6a6a6a;"></div>
<div class="r" style="left:700px;top:598px;width:2px;height:42px;background:#6a6a6a;"></div>
<div class="r" style="left:780px;top:598px;width:2px;height:42px;background:#6a6a6a;"></div>
<div class="r" style="left:828px;top:598px;width:2px;height:42px;background:#6a6a6a;"></div>
<div class="r" style="left:876px;top:598px;width:2px;height:42px;background:#6a6a6a;"></div>
<div class="r" style="left:924px;top:598px;width:2px;height:42px;background:#6a6a6a;"></div>
<div class="r" style="left:1164px;top:598px;width:2px;height:42px;background:#6a6a6a;"></div>
<div class="r" style="left:1212px;top:598px;width:2px;height:42px;background:#6a6a6a;"></div>
<div class="r" style="left:1260px;top:598px;width:2px;height:42px;background:#6a6a6a;"></div>
<div class="r" style="left:1440px;top:598px;width:2px;height:42px;background:#6a6a6a;"></div>
<div class="r" style="left:1971px;top:598px;width:2px;height:42px;background:#6a6a6a;"></div>
<div class="r" style="left:2068px;top:598px;width:2px;height:42px;background:#6a6a6a;"></div>
<div class="r" style="left:2268px;top:598px;width:2px;height:42px;background:#6a6a6a;"></div>
<div class="r" style="left:2468px;top:598px;width:2px;height:42px;background:#6a6a6a;"></div>
<div class="r" style="left:2616px;top:598px;width:2px;height:42px;background:#6a6a6a;"></div>
<div class="r" style="left:2680px;top:598px;width:2px;height:42px;background:#6a6a6a;"></div>
<div class="r" style="left:2920px;top:598px;width:2px;height:42px;background:#6a6a6a;"></div>
<div class="r" style="left:582px;top:604px;width:60px;height:28px;background:#fff;box-shadow:0 0 0 2px #a9a9a9 inset;"></div>
<div class="r" style="left:582px;top:604px;width:12px;height:28px;background:#a9a9a9;"></div>
<div class="t" style="left:-883.0px;width:3000px;text-align:center;top:608.3px;font-size:23.5px;font-weight:400;color:#000;">LS</div>
<div class="t" style="left:934.3px;top:607.9px;font-size:24.0px;font-weight:400;color:#e2e2e2;"><span style="letter-spacing:0.6px">2023</span><span style="margin:0 1.5px">-</span><span style="letter-spacing:0.6px">1009</span></div>
<div class="t" style="left:1270.0px;top:607.9px;font-size:24.0px;font-weight:400;color:#e2e2e2;"><span style="letter-spacing:0.6px">06</span>.<span style="letter-spacing:0.6px">01</span>.<span style="letter-spacing:0.6px">2023</span></div>
<div class="t" style="left:1451.0px;top:607.9px;font-size:24.0px;font-weight:400;color:#e2e2e2;">ALHAMBRA SOCIETY ASSOCIATION</div>
<div class="t" style="left:521.0px;width:3000px;text-align:center;top:607.9px;font-size:24.0px;font-weight:400;color:#e2e2e2;">CHF</div>
<div class="t" style="left:759.6px;width:1500px;text-align:right;top:607.9px;font-size:24.0px;font-weight:400;color:#e2e2e2;"><span style="letter-spacing:0.6px">772</span>.<span style="letter-spacing:0.6px">23</span></div>
<div class="t" style="left:959.6px;width:1500px;text-align:right;top:607.9px;font-size:24.0px;font-weight:400;color:#e2e2e2;"><span style="letter-spacing:0.6px">831</span>.<span style="letter-spacing:0.6px">69</span></div>
<div class="r" style="left:575px;top:640px;width:2537px;height:42px;background:#1e1e1e;"></div>
<div class="r" style="left:652px;top:640px;width:2px;height:42px;background:#6a6a6a;"></div>
<div class="r" style="left:700px;top:640px;width:2px;height:42px;background:#6a6a6a;"></div>
<div class="r" style="left:780px;top:640px;width:2px;height:42px;background:#6a6a6a;"></div>
<div class="r" style="left:828px;top:640px;width:2px;height:42px;background:#6a6a6a;"></div>
<div class="r" style="left:876px;top:640px;width:2px;height:42px;background:#6a6a6a;"></div>
<div class="r" style="left:924px;top:640px;width:2px;height:42px;background:#6a6a6a;"></div>
<div class="r" style="left:1164px;top:640px;width:2px;height:42px;background:#6a6a6a;"></div>
<div class="r" style="left:1212px;top:640px;width:2px;height:42px;background:#6a6a6a;"></div>
<div class="r" style="left:1260px;top:640px;width:2px;height:42px;background:#6a6a6a;"></div>
<div class="r" style="left:1440px;top:640px;width:2px;height:42px;background:#6a6a6a;"></div>
<div class="r" style="left:1971px;top:640px;width:2px;height:42px;background:#6a6a6a;"></div>
<div class="r" style="left:2068px;top:640px;width:2px;height:42px;background:#6a6a6a;"></div>
<div class="r" style="left:2268px;top:640px;width:2px;height:42px;background:#6a6a6a;"></div>
<div class="r" style="left:2468px;top:640px;width:2px;height:42px;background:#6a6a6a;"></div>
<div class="r" style="left:2616px;top:640px;width:2px;height:42px;background:#6a6a6a;"></div>
<div class="r" style="left:2680px;top:640px;width:2px;height:42px;background:#6a6a6a;"></div>
<div class="r" style="left:2920px;top:640px;width:2px;height:42px;background:#6a6a6a;"></div>
<div class="r" style="left:582px;top:646px;width:60px;height:28px;background:#fff;box-shadow:0 0 0 2px #5ccb59 inset;"></div>
<div class="r" style="left:582px;top:646px;width:12px;height:28px;background:#5ccb59;"></div>
<div class="t" style="left:-883.0px;width:3000px;text-align:center;top:650.3px;font-size:23.5px;font-weight:400;color:#000;">RE</div>
<svg class="r" style="left:794px;top:649px" width="24" height="24" viewBox="0 0 24 24"><g fill="none" stroke="#d8d8d8" stroke-width="2.5"><rect x="3.1" y="1.8" width="7.6" height="10.8" rx="3.3" transform="rotate(-45 6.9 7.2)"/><rect x="12.6" y="11.4" width="7.6" height="10.8" rx="3.3" transform="rotate(-45 16.4 16.8)"/></g></svg>
<div class="t" style="left:934.3px;top:649.9px;font-size:24.0px;font-weight:400;color:#e2e2e2;">R<span style="margin:0 1.5px">-</span><span style="letter-spacing:0.6px">2023</span><span style="margin:0 1.5px">-</span><span style="letter-spacing:0.6px">1054</span></div>
<div class="t" style="left:1270.0px;top:649.9px;font-size:24.0px;font-weight:400;color:#e2e2e2;"><span style="letter-spacing:0.6px">10</span>.<span style="letter-spacing:0.6px">01</span>.<span style="letter-spacing:0.6px">2023</span></div>
<div class="t" style="left:1451.0px;top:649.9px;font-size:24.0px;font-weight:400;color:#e2e2e2;">BERGMANN_AMELIE</div>
<div class="t" style="left:521.0px;width:3000px;text-align:center;top:649.9px;font-size:24.0px;font-weight:400;color:#e2e2e2;">CHF</div>
<div class="t" style="left:759.6px;width:1500px;text-align:right;top:649.9px;font-size:24.0px;font-weight:400;color:#e2e2e2;"><span style="letter-spacing:0.6px">516</span>.<span style="letter-spacing:0.6px">25</span></div>
<div class="t" style="left:959.6px;width:1500px;text-align:right;top:649.9px;font-size:24.0px;font-weight:400;color:#e2e2e2;"><span style="letter-spacing:0.6px">556</span>.<span style="letter-spacing:0.6px">00</span></div>
<div class="r" style="left:2478px;top:646px;width:88px;height:28px;background:#fff;box-shadow:0 0 0 2px #ec6a5f inset;"></div>
<div class="r" style="left:2478px;top:646px;width:10px;height:28px;background:#ec6a5f;"></div>
<div class="t" style="left:1024.5px;width:3000px;text-align:center;top:650.7px;font-size:23.0px;font-weight:400;color:#000;">Offen</div>
<div class="t" style="left:2690.6px;top:649.9px;font-size:24.0px;font-weight:400;color:#e2e2e2;"><span style="letter-spacing:0.6px">10</span> T<span style="letter-spacing:0.55px">age</span></div>
<div class="r" style="left:575px;top:682px;width:2537px;height:42px;background:#2e2f32;"></div>
<div class="r" style="left:652px;top:682px;width:2px;height:42px;background:#6a6a6a;"></div>
<div class="r" style="left:700px;top:682px;width:2px;height:42px;background:#6a6a6a;"></div>
<div class="r" style="left:780px;top:682px;width:2px;height:42px;background:#6a6a6a;"></div>
<div class="r" style="left:828px;top:682px;width:2px;height:42px;background:#6a6a6a;"></div>
<div class="r" style="left:876px;top:682px;width:2px;height:42px;background:#6a6a6a;"></div>
<div class="r" style="left:924px;top:682px;width:2px;height:42px;background:#6a6a6a;"></div>
<div class="r" style="left:1164px;top:682px;width:2px;height:42px;background:#6a6a6a;"></div>
<div class="r" style="left:1212px;top:682px;width:2px;height:42px;background:#6a6a6a;"></div>
<div class="r" style="left:1260px;top:682px;width:2px;height:42px;background:#6a6a6a;"></div>
<div class="r" style="left:1440px;top:682px;width:2px;height:42px;background:#6a6a6a;"></div>
<div class="r" style="left:1971px;top:682px;width:2px;height:42px;background:#6a6a6a;"></div>
<div class="r" style="left:2068px;top:682px;width:2px;height:42px;background:#6a6a6a;"></div>
<div class="r" style="left:2268px;top:682px;width:2px;height:42px;background:#6a6a6a;"></div>
<div class="r" style="left:2468px;top:682px;width:2px;height:42px;background:#6a6a6a;"></div>
<div class="r" style="left:2616px;top:682px;width:2px;height:42px;background:#6a6a6a;"></div>
<div class="r" style="left:2680px;top:682px;width:2px;height:42px;background:#6a6a6a;"></div>
<div class="r" style="left:2920px;top:682px;width:2px;height:42px;background:#6a6a6a;"></div>
<div class="r" style="left:582px;top:688px;width:60px;height:28px;background:#fff;box-shadow:0 0 0 2px #f2aa5b inset;"></div>
<div class="r" style="left:582px;top:688px;width:12px;height:28px;background:#f2aa5b;"></div>
<div class="t" style="left:-883.0px;width:3000px;text-align:center;top:692.3px;font-size:23.5px;font-weight:400;color:#000;">AN</div>
<div class="t" style="left:934.3px;top:691.9px;font-size:24.0px;font-weight:400;color:#e2e2e2;">OFFERTE<span style="margin:0 1.5px">-</span><span style="letter-spacing:0.6px">1023</span></div>
<div class="t" style="left:1270.0px;top:691.9px;font-size:24.0px;font-weight:400;color:#e2e2e2;"><span style="letter-spacing:0.6px">24</span>.<span style="letter-spacing:0.6px">01</span>.<span style="letter-spacing:0.6px">2023</span></div>
<div class="t" style="left:1451.0px;top:691.9px;font-size:24.0px;font-weight:400;color:#e2e2e2;">ALHAMBRA SOCIETY ASSOCIATION</div>
<div class="t" style="left:521.0px;width:3000px;text-align:center;top:691.9px;font-size:24.0px;font-weight:400;color:#e2e2e2;">CHF</div>
<div class="t" style="left:759.6px;width:1500px;text-align:right;top:691.9px;font-size:24.0px;font-weight:400;color:#e2e2e2;"><span style="letter-spacing:0.6px">772</span>.<span style="letter-spacing:0.6px">23</span></div>
<div class="t" style="left:959.6px;width:1500px;text-align:right;top:691.9px;font-size:24.0px;font-weight:400;color:#e2e2e2;"><span style="letter-spacing:0.6px">831</span>.<span style="letter-spacing:0.6px">69</span></div>
<div class="r" style="left:575px;top:724px;width:2537px;height:42px;background:#1e1e1e;"></div>
<div class="r" style="left:652px;top:724px;width:2px;height:42px;background:#6a6a6a;"></div>
<div class="r" style="left:700px;top:724px;width:2px;height:42px;background:#6a6a6a;"></div>
<div class="r" style="left:780px;top:724px;width:2px;height:42px;background:#6a6a6a;"></div>
<div class="r" style="left:828px;top:724px;width:2px;height:42px;background:#6a6a6a;"></div>
<div class="r" style="left:876px;top:724px;width:2px;height:42px;background:#6a6a6a;"></div>
<div class="r" style="left:924px;top:724px;width:2px;height:42px;background:#6a6a6a;"></div>
<div class="r" style="left:1164px;top:724px;width:2px;height:42px;background:#6a6a6a;"></div>
<div class="r" style="left:1212px;top:724px;width:2px;height:42px;background:#6a6a6a;"></div>
<div class="r" style="left:1260px;top:724px;width:2px;height:42px;background:#6a6a6a;"></div>
<div class="r" style="left:1440px;top:724px;width:2px;height:42px;background:#6a6a6a;"></div>
<div class="r" style="left:1971px;top:724px;width:2px;height:42px;background:#6a6a6a;"></div>
<div class="r" style="left:2068px;top:724px;width:2px;height:42px;background:#6a6a6a;"></div>
<div class="r" style="left:2268px;top:724px;width:2px;height:42px;background:#6a6a6a;"></div>
<div class="r" style="left:2468px;top:724px;width:2px;height:42px;background:#6a6a6a;"></div>
<div class="r" style="left:2616px;top:724px;width:2px;height:42px;background:#6a6a6a;"></div>
<div class="r" style="left:2680px;top:724px;width:2px;height:42px;background:#6a6a6a;"></div>
<div class="r" style="left:2920px;top:724px;width:2px;height:42px;background:#6a6a6a;"></div>
<div class="r" style="left:582px;top:730px;width:60px;height:28px;background:#fff;box-shadow:0 0 0 2px #5ccb59 inset;"></div>
<div class="r" style="left:582px;top:730px;width:12px;height:28px;background:#5ccb59;"></div>
<div class="t" style="left:-883.0px;width:3000px;text-align:center;top:734.3px;font-size:23.5px;font-weight:400;color:#000;">RE</div>
<div class="t" style="left:934.3px;top:733.9px;font-size:24.0px;font-weight:400;color:#e2e2e2;">R<span style="margin:0 1.5px">-</span><span style="letter-spacing:0.6px">2023</span><span style="margin:0 1.5px">-</span><span style="letter-spacing:0.6px">1055</span></div>
<div class="t" style="left:1270.0px;top:733.9px;font-size:24.0px;font-weight:400;color:#e2e2e2;"><span style="letter-spacing:0.6px">24</span>.<span style="letter-spacing:0.6px">01</span>.<span style="letter-spacing:0.6px">2023</span></div>
<div class="t" style="left:1451.0px;top:733.9px;font-size:24.0px;font-weight:400;color:#e2e2e2;">LOEWENZAHN</div>
<div class="t" style="left:521.0px;width:3000px;text-align:center;top:733.9px;font-size:24.0px;font-weight:400;color:#e2e2e2;">CHF</div>
<div class="t" style="left:759.6px;width:1500px;text-align:right;top:733.9px;font-size:24.0px;font-weight:400;color:#e2e2e2;"><span style="letter-spacing:0.6px">1</span>’<span style="letter-spacing:0.6px">143</span>.<span style="letter-spacing:0.6px">96</span></div>
<div class="t" style="left:959.6px;width:1500px;text-align:right;top:733.9px;font-size:24.0px;font-weight:400;color:#e2e2e2;"><span style="letter-spacing:0.6px">1</span>’<span style="letter-spacing:0.6px">232</span>.<span style="letter-spacing:0.6px">05</span></div>
<div class="r" style="left:2478px;top:730px;width:110px;height:28px;background:#fff;box-shadow:0 0 0 2px #5ccb59 inset;"></div>
<div class="r" style="left:2478px;top:730px;width:10px;height:28px;background:#5ccb59;"></div>
<div class="t" style="left:1035.5px;width:3000px;text-align:center;top:734.7px;font-size:23.0px;font-weight:400;color:#000;">Bezahlt</div>
<div class="t" style="left:2690.6px;top:733.9px;font-size:24.0px;font-weight:400;color:#e2e2e2;"><span style="letter-spacing:0.6px">30</span> T<span style="letter-spacing:0.55px">age</span> QRR</div>
<div class="r" style="left:575px;top:766px;width:2537px;height:42px;background:#2e2f32;"></div>
<div class="r" style="left:652px;top:766px;width:2px;height:42px;background:#6a6a6a;"></div>
<div class="r" style="left:700px;top:766px;width:2px;height:42px;background:#6a6a6a;"></div>
<div class="r" style="left:780px;top:766px;width:2px;height:42px;background:#6a6a6a;"></div>
<div class="r" style="left:828px;top:766px;width:2px;height:42px;background:#6a6a6a;"></div>
<div class="r" style="left:876px;top:766px;width:2px;height:42px;background:#6a6a6a;"></div>
<div class="r" style="left:924px;top:766px;width:2px;height:42px;background:#6a6a6a;"></div>
<div class="r" style="left:1164px;top:766px;width:2px;height:42px;background:#6a6a6a;"></div>
<div class="r" style="left:1212px;top:766px;width:2px;height:42px;background:#6a6a6a;"></div>
<div class="r" style="left:1260px;top:766px;width:2px;height:42px;background:#6a6a6a;"></div>
<div class="r" style="left:1440px;top:766px;width:2px;height:42px;background:#6a6a6a;"></div>
<div class="r" style="left:1971px;top:766px;width:2px;height:42px;background:#6a6a6a;"></div>
<div class="r" style="left:2068px;top:766px;width:2px;height:42px;background:#6a6a6a;"></div>
<div class="r" style="left:2268px;top:766px;width:2px;height:42px;background:#6a6a6a;"></div>
<div class="r" style="left:2468px;top:766px;width:2px;height:42px;background:#6a6a6a;"></div>
<div class="r" style="left:2616px;top:766px;width:2px;height:42px;background:#6a6a6a;"></div>
<div class="r" style="left:2680px;top:766px;width:2px;height:42px;background:#6a6a6a;"></div>
<div class="r" style="left:2920px;top:766px;width:2px;height:42px;background:#6a6a6a;"></div>
<div class="r" style="left:582px;top:772px;width:60px;height:28px;background:#fff;box-shadow:0 0 0 2px #5ccb59 inset;"></div>
<div class="r" style="left:582px;top:772px;width:12px;height:28px;background:#5ccb59;"></div>
<div class="t" style="left:-883.0px;width:3000px;text-align:center;top:776.3px;font-size:23.5px;font-weight:400;color:#000;">RE</div>
<div class="t" style="left:934.3px;top:775.9px;font-size:24.0px;font-weight:400;color:#e2e2e2;">R<span style="margin:0 1.5px">-</span><span style="letter-spacing:0.6px">2024</span><span style="margin:0 1.5px">-</span><span style="letter-spacing:0.6px">1057</span></div>
<div class="t" style="left:1270.0px;top:775.9px;font-size:24.0px;font-weight:400;color:#e2e2e2;"><span style="letter-spacing:0.6px">18</span>.<span style="letter-spacing:0.6px">01</span>.<span style="letter-spacing:0.6px">2024</span></div>
<div class="t" style="left:1451.0px;top:775.9px;font-size:24.0px;font-weight:400;color:#e2e2e2;">LOEWENZAHN</div>
<div class="t" style="left:521.0px;width:3000px;text-align:center;top:775.9px;font-size:24.0px;font-weight:400;color:#e2e2e2;">CHF</div>
<div class="t" style="left:759.6px;width:1500px;text-align:right;top:775.9px;font-size:24.0px;font-weight:400;color:#e2e2e2;"><span style="letter-spacing:0.6px">1</span>’<span style="letter-spacing:0.6px">344</span>.<span style="letter-spacing:0.6px">87</span></div>
<div class="t" style="left:959.6px;width:1500px;text-align:right;top:775.9px;font-size:24.0px;font-weight:400;color:#e2e2e2;"><span style="letter-spacing:0.6px">1</span>’<span style="letter-spacing:0.6px">453</span>.<span style="letter-spacing:0.6px">80</span></div>
<div class="r" style="left:2478px;top:772px;width:88px;height:28px;background:#fff;box-shadow:0 0 0 2px #ec6a5f inset;"></div>
<div class="r" style="left:2478px;top:772px;width:10px;height:28px;background:#ec6a5f;"></div>
<div class="t" style="left:1024.5px;width:3000px;text-align:center;top:776.7px;font-size:23.0px;font-weight:400;color:#000;">Offen</div>
<div class="t" style="left:2690.6px;top:775.9px;font-size:24.0px;font-weight:400;color:#e2e2e2;"><span style="letter-spacing:0.6px">30</span> T<span style="letter-spacing:0.55px">age</span> QRR</div>
<div class="r" style="left:575px;top:808px;width:2537px;height:42px;background:#1e1e1e;"></div>
<div class="r" style="left:652px;top:808px;width:2px;height:42px;background:#6a6a6a;"></div>
<div class="r" style="left:700px;top:808px;width:2px;height:42px;background:#6a6a6a;"></div>
<div class="r" style="left:780px;top:808px;width:2px;height:42px;background:#6a6a6a;"></div>
<div class="r" style="left:828px;top:808px;width:2px;height:42px;background:#6a6a6a;"></div>
<div class="r" style="left:876px;top:808px;width:2px;height:42px;background:#6a6a6a;"></div>
<div class="r" style="left:924px;top:808px;width:2px;height:42px;background:#6a6a6a;"></div>
<div class="r" style="left:1164px;top:808px;width:2px;height:42px;background:#6a6a6a;"></div>
<div class="r" style="left:1212px;top:808px;width:2px;height:42px;background:#6a6a6a;"></div>
<div class="r" style="left:1260px;top:808px;width:2px;height:42px;background:#6a6a6a;"></div>
<div class="r" style="left:1440px;top:808px;width:2px;height:42px;background:#6a6a6a;"></div>
<div class="r" style="left:1971px;top:808px;width:2px;height:42px;background:#6a6a6a;"></div>
<div class="r" style="left:2068px;top:808px;width:2px;height:42px;background:#6a6a6a;"></div>
<div class="r" style="left:2268px;top:808px;width:2px;height:42px;background:#6a6a6a;"></div>
<div class="r" style="left:2468px;top:808px;width:2px;height:42px;background:#6a6a6a;"></div>
<div class="r" style="left:2616px;top:808px;width:2px;height:42px;background:#6a6a6a;"></div>
<div class="r" style="left:2680px;top:808px;width:2px;height:42px;background:#6a6a6a;"></div>
<div class="r" style="left:2920px;top:808px;width:2px;height:42px;background:#6a6a6a;"></div>
<div class="r" style="left:582px;top:814px;width:60px;height:28px;background:#fff;box-shadow:0 0 0 2px #5ccb59 inset;"></div>
<div class="r" style="left:582px;top:814px;width:12px;height:28px;background:#5ccb59;"></div>
<div class="t" style="left:-883.0px;width:3000px;text-align:center;top:818.3px;font-size:23.5px;font-weight:400;color:#000;">RE</div>
<div class="t" style="left:934.3px;top:817.9px;font-size:24.0px;font-weight:400;color:#e2e2e2;">R<span style="margin:0 1.5px">-</span><span style="letter-spacing:0.6px">2024</span><span style="margin:0 1.5px">-</span><span style="letter-spacing:0.6px">1056</span></div>
<div class="t" style="left:1270.0px;top:817.9px;font-size:24.0px;font-weight:400;color:#e2e2e2;"><span style="letter-spacing:0.6px">24</span>.<span style="letter-spacing:0.6px">01</span>.<span style="letter-spacing:0.6px">2024</span></div>
<div class="t" style="left:1451.0px;top:817.9px;font-size:24.0px;font-weight:400;color:#e2e2e2;">LOEWENZAHN</div>
<div class="t" style="left:521.0px;width:3000px;text-align:center;top:817.9px;font-size:24.0px;font-weight:400;color:#e2e2e2;">CHF</div>
<div class="t" style="left:759.6px;width:1500px;text-align:right;top:817.9px;font-size:24.0px;font-weight:400;color:#e2e2e2;"><span style="letter-spacing:0.6px">1</span>’<span style="letter-spacing:0.6px">143</span>.<span style="letter-spacing:0.6px">96</span></div>
<div class="t" style="left:959.6px;width:1500px;text-align:right;top:817.9px;font-size:24.0px;font-weight:400;color:#e2e2e2;"><span style="letter-spacing:0.6px">1</span>’<span style="letter-spacing:0.6px">236</span>.<span style="letter-spacing:0.6px">62</span></div>
<div class="r" style="left:2478px;top:814px;width:88px;height:28px;background:#fff;box-shadow:0 0 0 2px #ec6a5f inset;"></div>
<div class="r" style="left:2478px;top:814px;width:10px;height:28px;background:#ec6a5f;"></div>
<div class="t" style="left:1024.5px;width:3000px;text-align:center;top:818.7px;font-size:23.0px;font-weight:400;color:#000;">Offen</div>
<div class="t" style="left:2690.6px;top:817.9px;font-size:24.0px;font-weight:400;color:#e2e2e2;"><span style="letter-spacing:0.6px">30</span> T<span style="letter-spacing:0.55px">age</span></div>
<div class="r" style="left:575px;top:850px;width:2537px;height:42px;background:#2e2f32;"></div>
<div class="r" style="left:652px;top:850px;width:2px;height:42px;background:#6a6a6a;"></div>
<div class="r" style="left:700px;top:850px;width:2px;height:42px;background:#6a6a6a;"></div>
<div class="r" style="left:780px;top:850px;width:2px;height:42px;background:#6a6a6a;"></div>
<div class="r" style="left:828px;top:850px;width:2px;height:42px;background:#6a6a6a;"></div>
<div class="r" style="left:876px;top:850px;width:2px;height:42px;background:#6a6a6a;"></div>
<div class="r" style="left:924px;top:850px;width:2px;height:42px;background:#6a6a6a;"></div>
<div class="r" style="left:1164px;top:850px;width:2px;height:42px;background:#6a6a6a;"></div>
<div class="r" style="left:1212px;top:850px;width:2px;height:42px;background:#6a6a6a;"></div>
<div class="r" style="left:1260px;top:850px;width:2px;height:42px;background:#6a6a6a;"></div>
<div class="r" style="left:1440px;top:850px;width:2px;height:42px;background:#6a6a6a;"></div>
<div class="r" style="left:1971px;top:850px;width:2px;height:42px;background:#6a6a6a;"></div>
<div class="r" style="left:2068px;top:850px;width:2px;height:42px;background:#6a6a6a;"></div>
<div class="r" style="left:2268px;top:850px;width:2px;height:42px;background:#6a6a6a;"></div>
<div class="r" style="left:2468px;top:850px;width:2px;height:42px;background:#6a6a6a;"></div>
<div class="r" style="left:2616px;top:850px;width:2px;height:42px;background:#6a6a6a;"></div>
<div class="r" style="left:2680px;top:850px;width:2px;height:42px;background:#6a6a6a;"></div>
<div class="r" style="left:2920px;top:850px;width:2px;height:42px;background:#6a6a6a;"></div>
<div class="r" style="left:582px;top:856px;width:60px;height:28px;background:#fff;box-shadow:0 0 0 2px #f2aa5b inset;"></div>
<div class="r" style="left:582px;top:856px;width:12px;height:28px;background:#f2aa5b;"></div>
<div class="t" style="left:-883.0px;width:3000px;text-align:center;top:860.3px;font-size:23.5px;font-weight:400;color:#000;">AN</div>
<div class="t" style="left:934.3px;top:859.9px;font-size:24.0px;font-weight:400;color:#e2e2e2;">O<span style="letter-spacing:0.55px">fferte</span><span style="margin:0 1.5px">-</span><span style="letter-spacing:0.6px">1007</span></div>
<div class="t" style="left:1270.0px;top:859.9px;font-size:24.0px;font-weight:400;color:#e2e2e2;"><span style="letter-spacing:0.6px">11</span>.<span style="letter-spacing:0.6px">05</span>.<span style="letter-spacing:0.6px">2024</span></div>
<div class="t" style="left:1451.0px;top:859.9px;font-size:24.0px;font-weight:400;color:#e2e2e2;">ALHAMBRA SOCIETY ASSOCIATION</div>
<div class="t" style="left:521.0px;width:3000px;text-align:center;top:859.9px;font-size:24.0px;font-weight:400;color:#e2e2e2;">CHF</div>
<div class="t" style="left:759.6px;width:1500px;text-align:right;top:859.9px;font-size:24.0px;font-weight:400;color:#e2e2e2;"><span style="letter-spacing:0.6px">772</span>.<span style="letter-spacing:0.6px">23</span></div>
<div class="t" style="left:959.6px;width:1500px;text-align:right;top:859.9px;font-size:24.0px;font-weight:400;color:#e2e2e2;"><span style="letter-spacing:0.6px">834</span>.<span style="letter-spacing:0.6px">78</span></div>
<div class="r" style="left:575px;top:892px;width:2537px;height:42px;background:#1e1e1e;"></div>
<div class="r" style="left:652px;top:892px;width:2px;height:42px;background:#6a6a6a;"></div>
<div class="r" style="left:700px;top:892px;width:2px;height:42px;background:#6a6a6a;"></div>
<div class="r" style="left:780px;top:892px;width:2px;height:42px;background:#6a6a6a;"></div>
<div class="r" style="left:828px;top:892px;width:2px;height:42px;background:#6a6a6a;"></div>
<div class="r" style="left:876px;top:892px;width:2px;height:42px;background:#6a6a6a;"></div>
<div class="r" style="left:924px;top:892px;width:2px;height:42px;background:#6a6a6a;"></div>
<div class="r" style="left:1164px;top:892px;width:2px;height:42px;background:#6a6a6a;"></div>
<div class="r" style="left:1212px;top:892px;width:2px;height:42px;background:#6a6a6a;"></div>
<div class="r" style="left:1260px;top:892px;width:2px;height:42px;background:#6a6a6a;"></div>
<div class="r" style="left:1440px;top:892px;width:2px;height:42px;background:#6a6a6a;"></div>
<div class="r" style="left:1971px;top:892px;width:2px;height:42px;background:#6a6a6a;"></div>
<div class="r" style="left:2068px;top:892px;width:2px;height:42px;background:#6a6a6a;"></div>
<div class="r" style="left:2268px;top:892px;width:2px;height:42px;background:#6a6a6a;"></div>
<div class="r" style="left:2468px;top:892px;width:2px;height:42px;background:#6a6a6a;"></div>
<div class="r" style="left:2616px;top:892px;width:2px;height:42px;background:#6a6a6a;"></div>
<div class="r" style="left:2680px;top:892px;width:2px;height:42px;background:#6a6a6a;"></div>
<div class="r" style="left:2920px;top:892px;width:2px;height:42px;background:#6a6a6a;"></div>
<div class="r" style="left:582px;top:898px;width:60px;height:28px;background:#fff;box-shadow:0 0 0 2px #a9a9a9 inset;"></div>
<div class="r" style="left:582px;top:898px;width:12px;height:28px;background:#a9a9a9;"></div>
<div class="t" style="left:-883.0px;width:3000px;text-align:center;top:902.3px;font-size:23.5px;font-weight:400;color:#000;">LS</div>
<div class="t" style="left:934.3px;top:901.9px;font-size:24.0px;font-weight:400;color:#e2e2e2;"><span style="letter-spacing:0.6px">2024</span><span style="margin:0 1.5px">-</span><span style="letter-spacing:0.6px">1010</span></div>
<div class="t" style="left:1270.0px;top:901.9px;font-size:24.0px;font-weight:400;color:#e2e2e2;"><span style="letter-spacing:0.6px">23</span>.<span style="letter-spacing:0.6px">05</span>.<span style="letter-spacing:0.6px">2024</span></div>
<div class="t" style="left:1451.0px;top:901.9px;font-size:24.0px;font-weight:400;color:#e2e2e2;">ALHAMBRA SOCIETY ASSOCIATION</div>
<div class="t" style="left:521.0px;width:3000px;text-align:center;top:901.9px;font-size:24.0px;font-weight:400;color:#e2e2e2;">CHF</div>
<div class="t" style="left:759.6px;width:1500px;text-align:right;top:901.9px;font-size:24.0px;font-weight:400;color:#e2e2e2;"><span style="letter-spacing:0.6px">772</span>.<span style="letter-spacing:0.6px">23</span></div>
<div class="t" style="left:959.6px;width:1500px;text-align:right;top:901.9px;font-size:24.0px;font-weight:400;color:#e2e2e2;"><span style="letter-spacing:0.6px">834</span>.<span style="letter-spacing:0.6px">78</span></div>
<div class="r" style="left:575px;top:934px;width:2537px;height:42px;background:#2e2f32;"></div>
<div class="r" style="left:652px;top:934px;width:2px;height:42px;background:#6a6a6a;"></div>
<div class="r" style="left:700px;top:934px;width:2px;height:42px;background:#6a6a6a;"></div>
<div class="r" style="left:780px;top:934px;width:2px;height:42px;background:#6a6a6a;"></div>
<div class="r" style="left:828px;top:934px;width:2px;height:42px;background:#6a6a6a;"></div>
<div class="r" style="left:876px;top:934px;width:2px;height:42px;background:#6a6a6a;"></div>
<div class="r" style="left:924px;top:934px;width:2px;height:42px;background:#6a6a6a;"></div>
<div class="r" style="left:1164px;top:934px;width:2px;height:42px;background:#6a6a6a;"></div>
<div class="r" style="left:1212px;top:934px;width:2px;height:42px;background:#6a6a6a;"></div>
<div class="r" style="left:1260px;top:934px;width:2px;height:42px;background:#6a6a6a;"></div>
<div class="r" style="left:1440px;top:934px;width:2px;height:42px;background:#6a6a6a;"></div>
<div class="r" style="left:1971px;top:934px;width:2px;height:42px;background:#6a6a6a;"></div>
<div class="r" style="left:2068px;top:934px;width:2px;height:42px;background:#6a6a6a;"></div>
<div class="r" style="left:2268px;top:934px;width:2px;height:42px;background:#6a6a6a;"></div>
<div class="r" style="left:2468px;top:934px;width:2px;height:42px;background:#6a6a6a;"></div>
<div class="r" style="left:2616px;top:934px;width:2px;height:42px;background:#6a6a6a;"></div>
<div class="r" style="left:2680px;top:934px;width:2px;height:42px;background:#6a6a6a;"></div>
<div class="r" style="left:2920px;top:934px;width:2px;height:42px;background:#6a6a6a;"></div>
<div class="r" style="left:582px;top:940px;width:60px;height:28px;background:#fff;box-shadow:0 0 0 2px #5ccb59 inset;"></div>
<div class="r" style="left:582px;top:940px;width:12px;height:28px;background:#5ccb59;"></div>
<div class="t" style="left:-883.0px;width:3000px;text-align:center;top:944.3px;font-size:23.5px;font-weight:400;color:#000;">RE</div>
<div class="t" style="left:934.3px;top:943.9px;font-size:24.0px;font-weight:400;color:#e2e2e2;">R<span style="margin:0 1.5px">-</span><span style="letter-spacing:0.6px">2024</span><span style="margin:0 1.5px">-</span><span style="letter-spacing:0.6px">1058</span></div>
<div class="t" style="left:1270.0px;top:943.9px;font-size:24.0px;font-weight:400;color:#e2e2e2;"><span style="letter-spacing:0.6px">23</span>.<span style="letter-spacing:0.6px">05</span>.<span style="letter-spacing:0.6px">2024</span></div>
<div class="t" style="left:1451.0px;top:943.9px;font-size:24.0px;font-weight:400;color:#e2e2e2;">LOEWENZAHN</div>
<div class="t" style="left:521.0px;width:3000px;text-align:center;top:943.9px;font-size:24.0px;font-weight:400;color:#e2e2e2;">CHF</div>
<div class="t" style="left:759.6px;width:1500px;text-align:right;top:943.9px;font-size:24.0px;font-weight:400;color:#e2e2e2;"><span style="letter-spacing:0.6px">1</span>’<span style="letter-spacing:0.6px">143</span>.<span style="letter-spacing:0.6px">94</span></div>
<div class="t" style="left:959.6px;width:1500px;text-align:right;top:943.9px;font-size:24.0px;font-weight:400;color:#e2e2e2;"><span style="letter-spacing:0.6px">1</span>’<span style="letter-spacing:0.6px">236</span>.<span style="letter-spacing:0.6px">60</span></div>
<div class="r" style="left:2478px;top:940px;width:88px;height:28px;background:#fff;box-shadow:0 0 0 2px #ec6a5f inset;"></div>
<div class="r" style="left:2478px;top:940px;width:10px;height:28px;background:#ec6a5f;"></div>
<div class="t" style="left:1024.5px;width:3000px;text-align:center;top:944.7px;font-size:23.0px;font-weight:400;color:#000;">Offen</div>
<div class="t" style="left:2690.6px;top:943.9px;font-size:24.0px;font-weight:400;color:#e2e2e2;"><span style="letter-spacing:0.6px">30</span> T<span style="letter-spacing:0.55px">age</span> QRR</div>
<div class="r" style="left:575px;top:976px;width:2537px;height:42px;background:#1e1e1e;"></div>
<div class="r" style="left:652px;top:976px;width:2px;height:42px;background:#6a6a6a;"></div>
<div class="r" style="left:700px;top:976px;width:2px;height:42px;background:#6a6a6a;"></div>
<div class="r" style="left:780px;top:976px;width:2px;height:42px;background:#6a6a6a;"></div>
<div class="r" style="left:828px;top:976px;width:2px;height:42px;background:#6a6a6a;"></div>
<div class="r" style="left:876px;top:976px;width:2px;height:42px;background:#6a6a6a;"></div>
<div class="r" style="left:924px;top:976px;width:2px;height:42px;background:#6a6a6a;"></div>
<div class="r" style="left:1164px;top:976px;width:2px;height:42px;background:#6a6a6a;"></div>
<div class="r" style="left:1212px;top:976px;width:2px;height:42px;background:#6a6a6a;"></div>
<div class="r" style="left:1260px;top:976px;width:2px;height:42px;background:#6a6a6a;"></div>
<div class="r" style="left:1440px;top:976px;width:2px;height:42px;background:#6a6a6a;"></div>
<div class="r" style="left:1971px;top:976px;width:2px;height:42px;background:#6a6a6a;"></div>
<div class="r" style="left:2068px;top:976px;width:2px;height:42px;background:#6a6a6a;"></div>
<div class="r" style="left:2268px;top:976px;width:2px;height:42px;background:#6a6a6a;"></div>
<div class="r" style="left:2468px;top:976px;width:2px;height:42px;background:#6a6a6a;"></div>
<div class="r" style="left:2616px;top:976px;width:2px;height:42px;background:#6a6a6a;"></div>
<div class="r" style="left:2680px;top:976px;width:2px;height:42px;background:#6a6a6a;"></div>
<div class="r" style="left:2920px;top:976px;width:2px;height:42px;background:#6a6a6a;"></div>
<div class="r" style="left:582px;top:982px;width:60px;height:28px;background:#fff;box-shadow:0 0 0 2px #5ccb59 inset;"></div>
<div class="r" style="left:582px;top:982px;width:12px;height:28px;background:#5ccb59;"></div>
<div class="t" style="left:-883.0px;width:3000px;text-align:center;top:986.3px;font-size:23.5px;font-weight:400;color:#000;">RE</div>
<div class="t" style="left:934.3px;top:985.9px;font-size:24.0px;font-weight:400;color:#e2e2e2;">R<span style="margin:0 1.5px">-</span><span style="letter-spacing:0.6px">2025</span><span style="margin:0 1.5px">-</span><span style="letter-spacing:0.6px">1059</span></div>
<div class="t" style="left:1270.0px;top:985.9px;font-size:24.0px;font-weight:400;color:#e2e2e2;"><span style="letter-spacing:0.6px">15</span>.<span style="letter-spacing:0.6px">01</span>.<span style="letter-spacing:0.6px">2025</span></div>
<div class="t" style="left:1451.0px;top:985.9px;font-size:24.0px;font-weight:400;color:#e2e2e2;">LOEWENZAHN</div>
<div class="t" style="left:521.0px;width:3000px;text-align:center;top:985.9px;font-size:24.0px;font-weight:400;color:#e2e2e2;">CHF</div>
<div class="t" style="left:759.6px;width:1500px;text-align:right;top:985.9px;font-size:24.0px;font-weight:400;color:#e2e2e2;"><span style="letter-spacing:0.6px">1</span>’<span style="letter-spacing:0.6px">344</span>.<span style="letter-spacing:0.6px">87</span></div>
<div class="t" style="left:959.6px;width:1500px;text-align:right;top:985.9px;font-size:24.0px;font-weight:400;color:#e2e2e2;"><span style="letter-spacing:0.6px">1</span>’<span style="letter-spacing:0.6px">453</span>.<span style="letter-spacing:0.6px">80</span></div>
<div class="r" style="left:2478px;top:982px;width:88px;height:28px;background:#fff;box-shadow:0 0 0 2px #ec6a5f inset;"></div>
<div class="r" style="left:2478px;top:982px;width:10px;height:28px;background:#ec6a5f;"></div>
<div class="t" style="left:1024.5px;width:3000px;text-align:center;top:986.7px;font-size:23.0px;font-weight:400;color:#000;">Offen</div>
<div class="t" style="left:2690.6px;top:985.9px;font-size:24.0px;font-weight:400;color:#e2e2e2;"><span style="letter-spacing:0.6px">30</span> T<span style="letter-spacing:0.55px">age</span> QRR</div>
<div class="t" style="left:2931.0px;top:985.9px;font-size:24.0px;font-weight:400;color:#e2e2e2;">ZUGF<span style="letter-spacing:0.55px">e</span>RD C...</div>
<div class="r" style="left:575px;top:1018px;width:2537px;height:42px;background:#2e2f32;"></div>
<div class="r" style="left:652px;top:1018px;width:2px;height:42px;background:#6a6a6a;"></div>
<div class="r" style="left:700px;top:1018px;width:2px;height:42px;background:#6a6a6a;"></div>
<div class="r" style="left:780px;top:1018px;width:2px;height:42px;background:#6a6a6a;"></div>
<div class="r" style="left:828px;top:1018px;width:2px;height:42px;background:#6a6a6a;"></div>
<div class="r" style="left:876px;top:1018px;width:2px;height:42px;background:#6a6a6a;"></div>
<div class="r" style="left:924px;top:1018px;width:2px;height:42px;background:#6a6a6a;"></div>
<div class="r" style="left:1164px;top:1018px;width:2px;height:42px;background:#6a6a6a;"></div>
<div class="r" style="left:1212px;top:1018px;width:2px;height:42px;background:#6a6a6a;"></div>
<div class="r" style="left:1260px;top:1018px;width:2px;height:42px;background:#6a6a6a;"></div>
<div class="r" style="left:1440px;top:1018px;width:2px;height:42px;background:#6a6a6a;"></div>
<div class="r" style="left:1971px;top:1018px;width:2px;height:42px;background:#6a6a6a;"></div>
<div class="r" style="left:2068px;top:1018px;width:2px;height:42px;background:#6a6a6a;"></div>
<div class="r" style="left:2268px;top:1018px;width:2px;height:42px;background:#6a6a6a;"></div>
<div class="r" style="left:2468px;top:1018px;width:2px;height:42px;background:#6a6a6a;"></div>
<div class="r" style="left:2616px;top:1018px;width:2px;height:42px;background:#6a6a6a;"></div>
<div class="r" style="left:2680px;top:1018px;width:2px;height:42px;background:#6a6a6a;"></div>
<div class="r" style="left:2920px;top:1018px;width:2px;height:42px;background:#6a6a6a;"></div>
<div class="r" style="left:582px;top:1024px;width:60px;height:28px;background:#fff;box-shadow:0 0 0 2px #f2aa5b inset;"></div>
<div class="r" style="left:582px;top:1024px;width:12px;height:28px;background:#f2aa5b;"></div>
<div class="t" style="left:-883.0px;width:3000px;text-align:center;top:1028.3px;font-size:23.5px;font-weight:400;color:#000;">AN</div>
<div class="t" style="left:934.3px;top:1027.9px;font-size:24.0px;font-weight:400;color:#e2e2e2;">O<span style="letter-spacing:0.55px">fferte</span><span style="margin:0 1.5px">-</span><span style="letter-spacing:0.6px">1008</span></div>
<div class="t" style="left:1270.0px;top:1027.9px;font-size:24.0px;font-weight:400;color:#e2e2e2;"><span style="letter-spacing:0.6px">21</span>.<span style="letter-spacing:0.6px">01</span>.<span style="letter-spacing:0.6px">2025</span></div>
<div class="t" style="left:1451.0px;top:1027.9px;font-size:24.0px;font-weight:400;color:#e2e2e2;">ALHAMBRA SOCIETY ASSOCIATION</div>
<div class="t" style="left:521.0px;width:3000px;text-align:center;top:1027.9px;font-size:24.0px;font-weight:400;color:#e2e2e2;">CHF</div>
<div class="t" style="left:759.6px;width:1500px;text-align:right;top:1027.9px;font-size:24.0px;font-weight:400;color:#e2e2e2;"><span style="letter-spacing:0.6px">772</span>.<span style="letter-spacing:0.6px">23</span></div>
<div class="t" style="left:959.6px;width:1500px;text-align:right;top:1027.9px;font-size:24.0px;font-weight:400;color:#e2e2e2;"><span style="letter-spacing:0.6px">834</span>.<span style="letter-spacing:0.6px">78</span></div>
<div class="t" style="left:2931.0px;top:1027.9px;font-size:24.0px;font-weight:400;color:#e2e2e2;">D<span style="letter-spacing:0.55px">rucker</span>/PDF</div>
<div class="r" style="left:575px;top:1060px;width:2537px;height:42px;background:#1e1e1e;"></div>
<div class="r" style="left:652px;top:1060px;width:2px;height:42px;background:#6a6a6a;"></div>
<div class="r" style="left:700px;top:1060px;width:2px;height:42px;background:#6a6a6a;"></div>
<div class="r" style="left:780px;top:1060px;width:2px;height:42px;background:#6a6a6a;"></div>
<div class="r" style="left:828px;top:1060px;width:2px;height:42px;background:#6a6a6a;"></div>
<div class="r" style="left:876px;top:1060px;width:2px;height:42px;background:#6a6a6a;"></div>
<div class="r" style="left:924px;top:1060px;width:2px;height:42px;background:#6a6a6a;"></div>
<div class="r" style="left:1164px;top:1060px;width:2px;height:42px;background:#6a6a6a;"></div>
<div class="r" style="left:1212px;top:1060px;width:2px;height:42px;background:#6a6a6a;"></div>
<div class="r" style="left:1260px;top:1060px;width:2px;height:42px;background:#6a6a6a;"></div>
<div class="r" style="left:1440px;top:1060px;width:2px;height:42px;background:#6a6a6a;"></div>
<div class="r" style="left:1971px;top:1060px;width:2px;height:42px;background:#6a6a6a;"></div>
<div class="r" style="left:2068px;top:1060px;width:2px;height:42px;background:#6a6a6a;"></div>
<div class="r" style="left:2268px;top:1060px;width:2px;height:42px;background:#6a6a6a;"></div>
<div class="r" style="left:2468px;top:1060px;width:2px;height:42px;background:#6a6a6a;"></div>
<div class="r" style="left:2616px;top:1060px;width:2px;height:42px;background:#6a6a6a;"></div>
<div class="r" style="left:2680px;top:1060px;width:2px;height:42px;background:#6a6a6a;"></div>
<div class="r" style="left:2920px;top:1060px;width:2px;height:42px;background:#6a6a6a;"></div>
<div class="r" style="left:582px;top:1066px;width:60px;height:28px;background:#fff;box-shadow:0 0 0 2px #a9a9a9 inset;"></div>
<div class="r" style="left:582px;top:1066px;width:12px;height:28px;background:#a9a9a9;"></div>
<div class="t" style="left:-883.0px;width:3000px;text-align:center;top:1070.3px;font-size:23.5px;font-weight:400;color:#000;">LS</div>
<div class="t" style="left:934.3px;top:1069.9px;font-size:24.0px;font-weight:400;color:#e2e2e2;"><span style="letter-spacing:0.6px">2025</span><span style="margin:0 1.5px">-</span><span style="letter-spacing:0.6px">1011</span></div>
<div class="t" style="left:1270.0px;top:1069.9px;font-size:24.0px;font-weight:400;color:#e2e2e2;"><span style="letter-spacing:0.6px">21</span>.<span style="letter-spacing:0.6px">01</span>.<span style="letter-spacing:0.6px">2025</span></div>
<div class="t" style="left:1451.0px;top:1069.9px;font-size:24.0px;font-weight:400;color:#e2e2e2;">ALHAMBRA SOCIETY ASSOCIATION</div>
<div class="t" style="left:521.0px;width:3000px;text-align:center;top:1069.9px;font-size:24.0px;font-weight:400;color:#e2e2e2;">CHF</div>
<div class="t" style="left:759.6px;width:1500px;text-align:right;top:1069.9px;font-size:24.0px;font-weight:400;color:#e2e2e2;"><span style="letter-spacing:0.6px">772</span>.<span style="letter-spacing:0.6px">23</span></div>
<div class="t" style="left:959.6px;width:1500px;text-align:right;top:1069.9px;font-size:24.0px;font-weight:400;color:#e2e2e2;"><span style="letter-spacing:0.6px">834</span>.<span style="letter-spacing:0.6px">78</span></div>
<div class="t" style="left:2931.0px;top:1069.9px;font-size:24.0px;font-weight:400;color:#e2e2e2;">D<span style="letter-spacing:0.55px">rucker</span>/PDF</div>
<div class="r" style="left:575px;top:1102px;width:2537px;height:42px;background:#2e2f32;"></div>
<div class="r" style="left:652px;top:1102px;width:2px;height:42px;background:#6a6a6a;"></div>
<div class="r" style="left:700px;top:1102px;width:2px;height:42px;background:#6a6a6a;"></div>
<div class="r" style="left:780px;top:1102px;width:2px;height:42px;background:#6a6a6a;"></div>
<div class="r" style="left:828px;top:1102px;width:2px;height:42px;background:#6a6a6a;"></div>
<div class="r" style="left:876px;top:1102px;width:2px;height:42px;background:#6a6a6a;"></div>
<div class="r" style="left:924px;top:1102px;width:2px;height:42px;background:#6a6a6a;"></div>
<div class="r" style="left:1164px;top:1102px;width:2px;height:42px;background:#6a6a6a;"></div>
<div class="r" style="left:1212px;top:1102px;width:2px;height:42px;background:#6a6a6a;"></div>
<div class="r" style="left:1260px;top:1102px;width:2px;height:42px;background:#6a6a6a;"></div>
<div class="r" style="left:1440px;top:1102px;width:2px;height:42px;background:#6a6a6a;"></div>
<div class="r" style="left:1971px;top:1102px;width:2px;height:42px;background:#6a6a6a;"></div>
<div class="r" style="left:2068px;top:1102px;width:2px;height:42px;background:#6a6a6a;"></div>
<div class="r" style="left:2268px;top:1102px;width:2px;height:42px;background:#6a6a6a;"></div>
<div class="r" style="left:2468px;top:1102px;width:2px;height:42px;background:#6a6a6a;"></div>
<div class="r" style="left:2616px;top:1102px;width:2px;height:42px;background:#6a6a6a;"></div>
<div class="r" style="left:2680px;top:1102px;width:2px;height:42px;background:#6a6a6a;"></div>
<div class="r" style="left:2920px;top:1102px;width:2px;height:42px;background:#6a6a6a;"></div>
<div class="r" style="left:582px;top:1108px;width:60px;height:28px;background:#fff;box-shadow:0 0 0 2px #5ccb59 inset;"></div>
<div class="r" style="left:582px;top:1108px;width:12px;height:28px;background:#5ccb59;"></div>
<div class="t" style="left:-883.0px;width:3000px;text-align:center;top:1112.3px;font-size:23.5px;font-weight:400;color:#000;">RE</div>
<div class="t" style="left:934.3px;top:1111.9px;font-size:24.0px;font-weight:400;color:#e2e2e2;">R<span style="margin:0 1.5px">-</span><span style="letter-spacing:0.6px">2025</span><span style="margin:0 1.5px">-</span><span style="letter-spacing:0.6px">1060</span></div>
<div class="t" style="left:1270.0px;top:1111.9px;font-size:24.0px;font-weight:400;color:#e2e2e2;"><span style="letter-spacing:0.6px">23</span>.<span style="letter-spacing:0.6px">01</span>.<span style="letter-spacing:0.6px">2025</span></div>
<div class="t" style="left:1451.0px;top:1111.9px;font-size:24.0px;font-weight:400;color:#e2e2e2;">LOEWENZAHN</div>
<div class="t" style="left:521.0px;width:3000px;text-align:center;top:1111.9px;font-size:24.0px;font-weight:400;color:#e2e2e2;">CHF</div>
<div class="t" style="left:759.6px;width:1500px;text-align:right;top:1111.9px;font-size:24.0px;font-weight:400;color:#e2e2e2;"><span style="letter-spacing:0.6px">1</span>’<span style="letter-spacing:0.6px">143</span>.<span style="letter-spacing:0.6px">96</span></div>
<div class="t" style="left:959.6px;width:1500px;text-align:right;top:1111.9px;font-size:24.0px;font-weight:400;color:#e2e2e2;"><span style="letter-spacing:0.6px">1</span>’<span style="letter-spacing:0.6px">236</span>.<span style="letter-spacing:0.6px">62</span></div>
<div class="r" style="left:2478px;top:1108px;width:88px;height:28px;background:#fff;box-shadow:0 0 0 2px #ec6a5f inset;"></div>
<div class="r" style="left:2478px;top:1108px;width:10px;height:28px;background:#ec6a5f;"></div>
<div class="t" style="left:1024.5px;width:3000px;text-align:center;top:1112.7px;font-size:23.0px;font-weight:400;color:#000;">Offen</div>
<div class="t" style="left:2690.6px;top:1111.9px;font-size:24.0px;font-weight:400;color:#e2e2e2;"><span style="letter-spacing:0.6px">30</span> T<span style="letter-spacing:0.55px">age</span></div>
<div class="t" style="left:2931.0px;top:1111.9px;font-size:24.0px;font-weight:400;color:#e2e2e2;">D<span style="letter-spacing:0.55px">rucker</span>/PDF</div>
<div class="r" style="left:575px;top:1144px;width:2537px;height:42px;background:#1e1e1e;"></div>
<div class="r" style="left:652px;top:1144px;width:2px;height:42px;background:#6a6a6a;"></div>
<div class="r" style="left:700px;top:1144px;width:2px;height:42px;background:#6a6a6a;"></div>
<div class="r" style="left:780px;top:1144px;width:2px;height:42px;background:#6a6a6a;"></div>
<div class="r" style="left:828px;top:1144px;width:2px;height:42px;background:#6a6a6a;"></div>
<div class="r" style="left:876px;top:1144px;width:2px;height:42px;background:#6a6a6a;"></div>
<div class="r" style="left:924px;top:1144px;width:2px;height:42px;background:#6a6a6a;"></div>
<div class="r" style="left:1164px;top:1144px;width:2px;height:42px;background:#6a6a6a;"></div>
<div class="r" style="left:1212px;top:1144px;width:2px;height:42px;background:#6a6a6a;"></div>
<div class="r" style="left:1260px;top:1144px;width:2px;height:42px;background:#6a6a6a;"></div>
<div class="r" style="left:1440px;top:1144px;width:2px;height:42px;background:#6a6a6a;"></div>
<div class="r" style="left:1971px;top:1144px;width:2px;height:42px;background:#6a6a6a;"></div>
<div class="r" style="left:2068px;top:1144px;width:2px;height:42px;background:#6a6a6a;"></div>
<div class="r" style="left:2268px;top:1144px;width:2px;height:42px;background:#6a6a6a;"></div>
<div class="r" style="left:2468px;top:1144px;width:2px;height:42px;background:#6a6a6a;"></div>
<div class="r" style="left:2616px;top:1144px;width:2px;height:42px;background:#6a6a6a;"></div>
<div class="r" style="left:2680px;top:1144px;width:2px;height:42px;background:#6a6a6a;"></div>
<div class="r" style="left:2920px;top:1144px;width:2px;height:42px;background:#6a6a6a;"></div>
<div class="r" style="left:582px;top:1150px;width:60px;height:28px;background:#fff;box-shadow:0 0 0 2px #f2aa5b inset;"></div>
<div class="r" style="left:582px;top:1150px;width:12px;height:28px;background:#f2aa5b;"></div>
<div class="t" style="left:-883.0px;width:3000px;text-align:center;top:1154.3px;font-size:23.5px;font-weight:400;color:#000;">AN</div>
<div class="t" style="left:934.3px;top:1153.9px;font-size:24.0px;font-weight:400;color:#e2e2e2;">OFFERTE<span style="margin:0 1.5px">-</span><span style="letter-spacing:0.6px">1005</span></div>
<div class="t" style="left:1270.0px;top:1153.9px;font-size:24.0px;font-weight:400;color:#e2e2e2;"><span style="letter-spacing:0.6px">13</span>.<span style="letter-spacing:0.6px">01</span>.<span style="letter-spacing:0.6px">2026</span></div>
<div class="t" style="left:1451.0px;top:1153.9px;font-size:24.0px;font-weight:400;color:#e2e2e2;">ALHAMBRA SOCIETY ASSOCIATION</div>
<div class="t" style="left:521.0px;width:3000px;text-align:center;top:1153.9px;font-size:24.0px;font-weight:400;color:#e2e2e2;">CHF</div>
<div class="t" style="left:759.6px;width:1500px;text-align:right;top:1153.9px;font-size:24.0px;font-weight:400;color:#e2e2e2;"><span style="letter-spacing:0.6px">772</span>.<span style="letter-spacing:0.6px">23</span></div>
<div class="t" style="left:959.6px;width:1500px;text-align:right;top:1153.9px;font-size:24.0px;font-weight:400;color:#e2e2e2;"><span style="letter-spacing:0.6px">834</span>.<span style="letter-spacing:0.6px">78</span></div>
<div class="t" style="left:2931.0px;top:1153.9px;font-size:24.0px;font-weight:400;color:#e2e2e2;">D<span style="letter-spacing:0.55px">rucker</span>/PDF</div>
<div class="r" style="left:575px;top:1186px;width:2537px;height:42px;background:#2e2f32;"></div>
<div class="r" style="left:652px;top:1186px;width:2px;height:42px;background:#6a6a6a;"></div>
<div class="r" style="left:700px;top:1186px;width:2px;height:42px;background:#6a6a6a;"></div>
<div class="r" style="left:780px;top:1186px;width:2px;height:42px;background:#6a6a6a;"></div>
<div class="r" style="left:828px;top:1186px;width:2px;height:42px;background:#6a6a6a;"></div>
<div class="r" style="left:876px;top:1186px;width:2px;height:42px;background:#6a6a6a;"></div>
<div class="r" style="left:924px;top:1186px;width:2px;height:42px;background:#6a6a6a;"></div>
<div class="r" style="left:1164px;top:1186px;width:2px;height:42px;background:#6a6a6a;"></div>
<div class="r" style="left:1212px;top:1186px;width:2px;height:42px;background:#6a6a6a;"></div>
<div class="r" style="left:1260px;top:1186px;width:2px;height:42px;background:#6a6a6a;"></div>
<div class="r" style="left:1440px;top:1186px;width:2px;height:42px;background:#6a6a6a;"></div>
<div class="r" style="left:1971px;top:1186px;width:2px;height:42px;background:#6a6a6a;"></div>
<div class="r" style="left:2068px;top:1186px;width:2px;height:42px;background:#6a6a6a;"></div>
<div class="r" style="left:2268px;top:1186px;width:2px;height:42px;background:#6a6a6a;"></div>
<div class="r" style="left:2468px;top:1186px;width:2px;height:42px;background:#6a6a6a;"></div>
<div class="r" style="left:2616px;top:1186px;width:2px;height:42px;background:#6a6a6a;"></div>
<div class="r" style="left:2680px;top:1186px;width:2px;height:42px;background:#6a6a6a;"></div>
<div class="r" style="left:2920px;top:1186px;width:2px;height:42px;background:#6a6a6a;"></div>
<div class="r" style="left:582px;top:1192px;width:60px;height:28px;background:#fff;box-shadow:0 0 0 2px #5ccb59 inset;"></div>
<div class="r" style="left:582px;top:1192px;width:12px;height:28px;background:#5ccb59;"></div>
<div class="t" style="left:-883.0px;width:3000px;text-align:center;top:1196.3px;font-size:23.5px;font-weight:400;color:#000;">RE</div>
<div class="t" style="left:934.3px;top:1195.9px;font-size:24.0px;font-weight:400;color:#e2e2e2;">R<span style="margin:0 1.5px">-</span><span style="letter-spacing:0.6px">2026</span><span style="margin:0 1.5px">-</span><span style="letter-spacing:0.6px">1063</span></div>
<div class="t" style="left:1270.0px;top:1195.9px;font-size:24.0px;font-weight:400;color:#e2e2e2;"><span style="letter-spacing:0.6px">15</span>.<span style="letter-spacing:0.6px">01</span>.<span style="letter-spacing:0.6px">2026</span></div>
<div class="t" style="left:1451.0px;top:1195.9px;font-size:24.0px;font-weight:400;color:#e2e2e2;">LOEWENZAHN</div>
<div class="t" style="left:521.0px;width:3000px;text-align:center;top:1195.9px;font-size:24.0px;font-weight:400;color:#e2e2e2;">CHF</div>
<div class="t" style="left:759.6px;width:1500px;text-align:right;top:1195.9px;font-size:24.0px;font-weight:400;color:#e2e2e2;"><span style="letter-spacing:0.6px">1</span>’<span style="letter-spacing:0.6px">344</span>.<span style="letter-spacing:0.6px">87</span></div>
<div class="t" style="left:959.6px;width:1500px;text-align:right;top:1195.9px;font-size:24.0px;font-weight:400;color:#e2e2e2;"><span style="letter-spacing:0.6px">1</span>’<span style="letter-spacing:0.6px">453</span>.<span style="letter-spacing:0.6px">80</span></div>
<div class="r" style="left:2478px;top:1192px;width:110px;height:28px;background:#fff;box-shadow:0 0 0 2px #5ccb59 inset;"></div>
<div class="r" style="left:2478px;top:1192px;width:10px;height:28px;background:#5ccb59;"></div>
<div class="t" style="left:1035.5px;width:3000px;text-align:center;top:1196.7px;font-size:23.0px;font-weight:400;color:#000;">Bezahlt</div>
<div class="t" style="left:2690.6px;top:1195.9px;font-size:24.0px;font-weight:400;color:#e2e2e2;"><span style="letter-spacing:0.6px">30</span> T<span style="letter-spacing:0.55px">age</span> QRR</div>
<div class="t" style="left:2931.0px;top:1195.9px;font-size:24.0px;font-weight:400;color:#e2e2e2;">D<span style="letter-spacing:0.55px">rucker</span>/PDF</div>
<div class="r" style="left:575px;top:1228px;width:2537px;height:42px;background:#1e1e1e;"></div>
<div class="r" style="left:652px;top:1228px;width:2px;height:42px;background:#6a6a6a;"></div>
<div class="r" style="left:700px;top:1228px;width:2px;height:42px;background:#6a6a6a;"></div>
<div class="r" style="left:780px;top:1228px;width:2px;height:42px;background:#6a6a6a;"></div>
<div class="r" style="left:828px;top:1228px;width:2px;height:42px;background:#6a6a6a;"></div>
<div class="r" style="left:876px;top:1228px;width:2px;height:42px;background:#6a6a6a;"></div>
<div class="r" style="left:924px;top:1228px;width:2px;height:42px;background:#6a6a6a;"></div>
<div class="r" style="left:1164px;top:1228px;width:2px;height:42px;background:#6a6a6a;"></div>
<div class="r" style="left:1212px;top:1228px;width:2px;height:42px;background:#6a6a6a;"></div>
<div class="r" style="left:1260px;top:1228px;width:2px;height:42px;background:#6a6a6a;"></div>
<div class="r" style="left:1440px;top:1228px;width:2px;height:42px;background:#6a6a6a;"></div>
<div class="r" style="left:1971px;top:1228px;width:2px;height:42px;background:#6a6a6a;"></div>
<div class="r" style="left:2068px;top:1228px;width:2px;height:42px;background:#6a6a6a;"></div>
<div class="r" style="left:2268px;top:1228px;width:2px;height:42px;background:#6a6a6a;"></div>
<div class="r" style="left:2468px;top:1228px;width:2px;height:42px;background:#6a6a6a;"></div>
<div class="r" style="left:2616px;top:1228px;width:2px;height:42px;background:#6a6a6a;"></div>
<div class="r" style="left:2680px;top:1228px;width:2px;height:42px;background:#6a6a6a;"></div>
<div class="r" style="left:2920px;top:1228px;width:2px;height:42px;background:#6a6a6a;"></div>
<div class="r" style="left:582px;top:1234px;width:60px;height:28px;background:#fff;box-shadow:0 0 0 2px #a9a9a9 inset;"></div>
<div class="r" style="left:582px;top:1234px;width:12px;height:28px;background:#a9a9a9;"></div>
<div class="t" style="left:-883.0px;width:3000px;text-align:center;top:1238.3px;font-size:23.5px;font-weight:400;color:#000;">LS</div>
<div class="t" style="left:934.3px;top:1237.9px;font-size:24.0px;font-weight:400;color:#e2e2e2;"><span style="letter-spacing:0.6px">2026</span><span style="margin:0 1.5px">-</span><span style="letter-spacing:0.6px">1012</span></div>
<div class="t" style="left:1270.0px;top:1237.9px;font-size:24.0px;font-weight:400;color:#e2e2e2;"><span style="letter-spacing:0.6px">21</span>.<span style="letter-spacing:0.6px">01</span>.<span style="letter-spacing:0.6px">2026</span></div>
<div class="t" style="left:1451.0px;top:1237.9px;font-size:24.0px;font-weight:400;color:#e2e2e2;">ALHAMBRA SOCIETY ASSOCIATION</div>
<div class="t" style="left:521.0px;width:3000px;text-align:center;top:1237.9px;font-size:24.0px;font-weight:400;color:#e2e2e2;">CHF</div>
<div class="t" style="left:759.6px;width:1500px;text-align:right;top:1237.9px;font-size:24.0px;font-weight:400;color:#e2e2e2;"><span style="letter-spacing:0.6px">772</span>.<span style="letter-spacing:0.6px">23</span></div>
<div class="t" style="left:959.6px;width:1500px;text-align:right;top:1237.9px;font-size:24.0px;font-weight:400;color:#e2e2e2;"><span style="letter-spacing:0.6px">834</span>.<span style="letter-spacing:0.6px">78</span></div>
<div class="t" style="left:2931.0px;top:1237.9px;font-size:24.0px;font-weight:400;color:#e2e2e2;">D<span style="letter-spacing:0.55px">rucker</span>/PDF</div>
<div class="r" style="left:575px;top:1270px;width:2537px;height:42px;background:#2456cc;"></div>
<div class="r" style="left:652px;top:1270px;width:2px;height:42px;background:#776f60;"></div>
<div class="r" style="left:700px;top:1270px;width:2px;height:42px;background:#776f60;"></div>
<div class="r" style="left:780px;top:1270px;width:2px;height:42px;background:#776f60;"></div>
<div class="r" style="left:828px;top:1270px;width:2px;height:42px;background:#776f60;"></div>
<div class="r" style="left:876px;top:1270px;width:2px;height:42px;background:#776f60;"></div>
<div class="r" style="left:924px;top:1270px;width:2px;height:42px;background:#776f60;"></div>
<div class="r" style="left:1164px;top:1270px;width:2px;height:42px;background:#776f60;"></div>
<div class="r" style="left:1212px;top:1270px;width:2px;height:42px;background:#776f60;"></div>
<div class="r" style="left:1260px;top:1270px;width:2px;height:42px;background:#776f60;"></div>
<div class="r" style="left:1440px;top:1270px;width:2px;height:42px;background:#776f60;"></div>
<div class="r" style="left:1971px;top:1270px;width:2px;height:42px;background:#776f60;"></div>
<div class="r" style="left:2068px;top:1270px;width:2px;height:42px;background:#776f60;"></div>
<div class="r" style="left:2268px;top:1270px;width:2px;height:42px;background:#776f60;"></div>
<div class="r" style="left:2468px;top:1270px;width:2px;height:42px;background:#776f60;"></div>
<div class="r" style="left:2616px;top:1270px;width:2px;height:42px;background:#776f60;"></div>
<div class="r" style="left:2680px;top:1270px;width:2px;height:42px;background:#776f60;"></div>
<div class="r" style="left:2920px;top:1270px;width:2px;height:42px;background:#776f60;"></div>
<div class="r" style="left:582px;top:1276px;width:60px;height:28px;background:#fff;box-shadow:0 0 0 2px #5ccb59 inset;"></div>
<div class="r" style="left:582px;top:1276px;width:12px;height:28px;background:#5ccb59;"></div>
<div class="t" style="left:-883.0px;width:3000px;text-align:center;top:1280.3px;font-size:23.5px;font-weight:400;color:#000;">RE</div>
<div class="t" style="left:934.3px;top:1279.9px;font-size:24.0px;font-weight:400;color:#ffffff;">R<span style="margin:0 1.5px">-</span><span style="letter-spacing:0.6px">2026</span><span style="margin:0 1.5px">-</span><span style="letter-spacing:0.6px">1064</span></div>
<div class="t" style="left:1270.0px;top:1279.9px;font-size:24.0px;font-weight:400;color:#ffffff;"><span style="letter-spacing:0.6px">23</span>.<span style="letter-spacing:0.6px">02</span>.<span style="letter-spacing:0.6px">2026</span></div>
<div class="t" style="left:1451.0px;top:1279.9px;font-size:24.0px;font-weight:400;color:#ffffff;">LOEWENZAHN</div>
<div class="t" style="left:521.0px;width:3000px;text-align:center;top:1279.9px;font-size:24.0px;font-weight:400;color:#ffffff;">CHF</div>
<div class="t" style="left:759.6px;width:1500px;text-align:right;top:1279.9px;font-size:24.0px;font-weight:400;color:#ffffff;"><span style="letter-spacing:0.6px">1</span>’<span style="letter-spacing:0.6px">143</span>.<span style="letter-spacing:0.6px">96</span></div>
<div class="t" style="left:959.6px;width:1500px;text-align:right;top:1279.9px;font-size:24.0px;font-weight:400;color:#ffffff;"><span style="letter-spacing:0.6px">1</span>’<span style="letter-spacing:0.6px">236</span>.<span style="letter-spacing:0.6px">62</span></div>
<div class="r" style="left:2478px;top:1276px;width:88px;height:28px;background:#fff;box-shadow:0 0 0 2px #ec6a5f inset;"></div>
<div class="r" style="left:2478px;top:1276px;width:10px;height:28px;background:#ec6a5f;"></div>
<div class="t" style="left:1024.5px;width:3000px;text-align:center;top:1280.7px;font-size:23.0px;font-weight:400;color:#000;">Offen</div>
<div class="t" style="left:2690.6px;top:1279.9px;font-size:24.0px;font-weight:400;color:#ffffff;"><span style="letter-spacing:0.6px">30</span> T<span style="letter-spacing:0.55px">age</span> IBAN</div>
<div class="t" style="left:2931.0px;top:1279.9px;font-size:24.0px;font-weight:400;color:#ffffff;">D<span style="letter-spacing:0.55px">rucker</span>/PDF</div>
<div class="r" style="left:3112px;top:430px;width:30px;height:892px;background:#262626;"></div>
<div class="r" style="left:3112px;top:430px;width:2px;height:892px;background:#2e2e2e;"></div>
<div class="r" style="left:3120px;top:1010px;width:16px;height:306px;background:#8d8d8d;border-radius:8px;"></div>
<div class="r" style="left:575px;top:1322px;width:2567px;height:2px;background:#6b6b6b;"></div>
<div class="r" style="left:1838px;top:1330px;width:42px;height:2px;background:#6e6e6e;"></div>
<div class="r" style="left:575px;top:1338px;width:2567px;height:2px;background:#6b6b6b;"></div>
<div class="r" style="left:575px;top:1340px;width:2567px;height:44px;background:#262626;"></div>
<div class="r" style="left:575px;top:1384px;width:2567px;height:2px;background:#1b1b1b;"></div>
<div class="r" style="left:671.5px;top:1346px;width:2.0px;height:34px;background:#1a1a1a;"></div>
<div class="r" style="left:872px;top:1346px;width:2px;height:34px;background:#1a1a1a;"></div>
<div class="r" style="left:1372px;top:1346px;width:2px;height:34px;background:#1a1a1a;"></div>
<div class="r" style="left:1572.5px;top:1346px;width:2.0px;height:34px;background:#1a1a1a;"></div>
<div class="r" style="left:1772px;top:1346px;width:2px;height:34px;background:#1a1a1a;"></div>
<div class="r" style="left:1972.4px;top:1346px;width:2.0px;height:34px;background:#1a1a1a;"></div>
<div class="r" style="left:2072.4px;top:1346px;width:2.0px;height:34px;background:#1a1a1a;"></div>
<div class="r" style="left:2272px;top:1346px;width:2px;height:34px;background:#1a1a1a;"></div>
<div class="r" style="left:2472px;top:1346px;width:2px;height:34px;background:#1a1a1a;"></div>
<div class="t" style="left:-836.5px;width:1500px;text-align:right;top:1351.7px;font-size:24px;font-weight:400;color:#f2f2f2;">P<span style="letter-spacing:0.55px">os</span>N<span style="letter-spacing:0.55px">r</span></div>
<div class="t" style="left:684.5px;top:1351.7px;font-size:24px;font-weight:400;color:#f2f2f2;">A<span style="letter-spacing:0.55px">rtikel</span>N<span style="letter-spacing:0.55px">r</span></div>
<div class="t" style="left:884.4px;top:1351.7px;font-size:24px;font-weight:400;color:#f2f2f2;">B<span style="letter-spacing:0.55px">ezeichnung</span></div>
<div class="t" style="left:63.2px;width:1500px;text-align:right;top:1351.7px;font-size:24px;font-weight:400;color:#f2f2f2;">M<span style="letter-spacing:0.55px">enge</span></div>
<div class="t" style="left:1584.3px;top:1351.7px;font-size:24px;font-weight:400;color:#f2f2f2;">E<span style="letter-spacing:0.55px">inheit</span></div>
<div class="t" style="left:463.5px;width:1500px;text-align:right;top:1351.7px;font-size:24px;font-weight:400;color:#f2f2f2;">P<span style="letter-spacing:0.55px">reis</span></div>
<div class="t" style="left:563.6px;width:1500px;text-align:right;top:1351.7px;font-size:24px;font-weight:400;color:#f2f2f2;">R<span style="letter-spacing:0.55px">abatt</span></div>
<div class="t" style="left:763.1px;width:1500px;text-align:right;top:1351.7px;font-size:24px;font-weight:400;color:#f2f2f2;">G<span style="letter-spacing:0.55px">esamtpreis</span></div>
<div class="t" style="left:963.6px;width:1500px;text-align:right;top:1351.7px;font-size:24px;font-weight:400;color:#f2f2f2;">K<span style="letter-spacing:0.55px">onto</span></div>
<div class="r" style="left:671.5px;top:1387px;width:2.0px;height:167px;background:#6a6a6a;"></div>
<div class="r" style="left:872px;top:1387px;width:2px;height:167px;background:#6a6a6a;"></div>
<div class="r" style="left:1372px;top:1387px;width:2px;height:167px;background:#6a6a6a;"></div>
<div class="r" style="left:1572.5px;top:1387px;width:2.0px;height:167px;background:#6a6a6a;"></div>
<div class="r" style="left:1772px;top:1387px;width:2px;height:167px;background:#6a6a6a;"></div>
<div class="r" style="left:1972.4px;top:1387px;width:2.0px;height:167px;background:#6a6a6a;"></div>
<div class="r" style="left:2072.4px;top:1387px;width:2.0px;height:167px;background:#6a6a6a;"></div>
<div class="r" style="left:2272px;top:1387px;width:2px;height:167px;background:#6a6a6a;"></div>
<div class="r" style="left:2472px;top:1387px;width:2px;height:167px;background:#6a6a6a;"></div>
<div class="t" style="left:-836.4px;width:1500px;text-align:right;top:1395.7px;font-size:24.0px;font-weight:400;color:#e2e2e2;"><span style="letter-spacing:0.6px">1</span></div>
<div class="t" style="left:682.8px;top:1395.7px;font-size:24.0px;font-weight:400;color:#e2e2e2;">E<span style="letter-spacing:0.55px">nt</span></div>
<div class="t" style="left:882.7px;top:1395.7px;font-size:24.0px;font-weight:400;color:#e2e2e2;">E<span style="letter-spacing:0.55px">ntwicklung</span></div>
<div class="t" style="left:63.3px;width:1500px;text-align:right;top:1395.7px;font-size:24.0px;font-weight:400;color:#e2e2e2;"><span style="letter-spacing:0.6px">3</span>.<span style="letter-spacing:0.6px">00</span></div>
<div class="t" style="left:1584.3px;top:1395.7px;font-size:24.0px;font-weight:400;color:#e2e2e2;">S<span style="letter-spacing:0.55px">tk</span></div>
<div class="t" style="left:463.6px;width:1500px;text-align:right;top:1395.7px;font-size:24.0px;font-weight:400;color:#e2e2e2;"><span style="letter-spacing:0.6px">200</span>.<span style="letter-spacing:0.6px">74</span></div>
<div class="t" style="left:563.6px;width:1500px;text-align:right;top:1395.7px;font-size:24.0px;font-weight:400;color:#e2e2e2;"><span style="letter-spacing:0.6px">12</span>.<span style="letter-spacing:0.6px">10</span></div>
<div class="t" style="left:763.1px;width:1500px;text-align:right;top:1395.7px;font-size:24.0px;font-weight:400;color:#e2e2e2;"><span style="letter-spacing:0.6px">529</span>.<span style="letter-spacing:0.6px">35</span></div>
<div class="t" style="left:963.6px;width:1500px;text-align:right;top:1395.7px;font-size:24.0px;font-weight:400;color:#e2e2e2;"><span style="letter-spacing:0.6px">3400</span></div>
<div class="t" style="left:-836.4px;width:1500px;text-align:right;top:1437.7px;font-size:24.0px;font-weight:400;color:#e2e2e2;"><span style="letter-spacing:0.6px">2</span></div>
<div class="t" style="left:682.8px;top:1437.7px;font-size:24.0px;font-weight:400;color:#e2e2e2;">GPS<span style="letter-spacing:0.6px">12</span></div>
<div class="t" style="left:882.7px;top:1437.7px;font-size:24.0px;font-weight:400;color:#e2e2e2;">GPS T<span style="letter-spacing:0.55px">racker</span></div>
<div class="t" style="left:63.3px;width:1500px;text-align:right;top:1437.7px;font-size:24.0px;font-weight:400;color:#e2e2e2;"><span style="letter-spacing:0.6px">2</span>.<span style="letter-spacing:0.6px">00</span></div>
<div class="t" style="left:1584.3px;top:1437.7px;font-size:24.0px;font-weight:400;color:#e2e2e2;">S<span style="letter-spacing:0.55px">tk</span></div>
<div class="t" style="left:463.6px;width:1500px;text-align:right;top:1437.7px;font-size:24.0px;font-weight:400;color:#e2e2e2;"><span style="letter-spacing:0.6px">278</span>.<span style="letter-spacing:0.6px">03</span></div>
<div class="t" style="left:563.6px;width:1500px;text-align:right;top:1437.7px;font-size:24.0px;font-weight:400;color:#e2e2e2;"><span style="letter-spacing:0.6px">21</span>.<span style="letter-spacing:0.6px">90</span></div>
<div class="t" style="left:763.1px;width:1500px;text-align:right;top:1437.7px;font-size:24.0px;font-weight:400;color:#e2e2e2;"><span style="letter-spacing:0.6px">434</span>.<span style="letter-spacing:0.6px">28</span></div>
<div class="t" style="left:963.6px;width:1500px;text-align:right;top:1437.7px;font-size:24.0px;font-weight:400;color:#e2e2e2;"><span style="letter-spacing:0.6px">3000</span></div>
<div class="t" style="left:-836.4px;width:1500px;text-align:right;top:1479.7px;font-size:24.0px;font-weight:400;color:#e2e2e2;"><span style="letter-spacing:0.6px">3</span></div>
<div class="t" style="left:682.8px;top:1479.7px;font-size:24.0px;font-weight:400;color:#e2e2e2;">KTSA<span style="letter-spacing:0.6px">10</span>E</div>
<div class="t" style="left:882.7px;top:1479.7px;font-size:24.0px;font-weight:400;color:#e2e2e2;">S<span style="letter-spacing:0.55px">hake</span>H<span style="letter-spacing:0.55px">ands</span> KONTOR S<span style="letter-spacing:0.55px">aldo</span> <span style="letter-spacing:0.55px">für</span> OS X <span style="letter-spacing:0.55px">und</span>...</div>
<div class="t" style="left:63.3px;width:1500px;text-align:right;top:1479.7px;font-size:24.0px;font-weight:400;color:#e2e2e2;"><span style="letter-spacing:0.6px">1</span>.<span style="letter-spacing:0.6px">00</span></div>
<div class="t" style="left:1584.3px;top:1479.7px;font-size:24.0px;font-weight:400;color:#e2e2e2;">S<span style="letter-spacing:0.55px">tk</span></div>
<div class="t" style="left:463.6px;width:1500px;text-align:right;top:1479.7px;font-size:24.0px;font-weight:400;color:#e2e2e2;"><span style="letter-spacing:0.6px">273</span>.<span style="letter-spacing:0.6px">01</span></div>
<div class="t" style="left:563.6px;width:1500px;text-align:right;top:1479.7px;font-size:24.0px;font-weight:400;color:#e2e2e2;"><span style="letter-spacing:0.6px">0</span>.<span style="letter-spacing:0.6px">00</span></div>
<div class="t" style="left:763.1px;width:1500px;text-align:right;top:1479.7px;font-size:24.0px;font-weight:400;color:#e2e2e2;"><span style="letter-spacing:0.6px">273</span>.<span style="letter-spacing:0.6px">01</span></div>
<div class="t" style="left:963.6px;width:1500px;text-align:right;top:1479.7px;font-size:24.0px;font-weight:400;color:#e2e2e2;"><span style="letter-spacing:0.6px">3000</span></div>
<div class="t" style="left:-836.4px;width:1500px;text-align:right;top:1521.7px;font-size:24.0px;font-weight:400;color:#e2e2e2;"><span style="letter-spacing:0.6px">4</span></div>
<div class="t" style="left:682.8px;top:1521.7px;font-size:24.0px;font-weight:400;color:#e2e2e2;">RUN</div>
<div class="t" style="left:882.7px;top:1521.7px;font-size:24.0px;font-weight:400;color:#e2e2e2;">K<span style="letter-spacing:0.55px">aufmännische</span> R<span style="letter-spacing:0.55px">undung</span></div>
<div class="t" style="left:63.3px;width:1500px;text-align:right;top:1521.7px;font-size:24.0px;font-weight:400;color:#e2e2e2;"><span style="letter-spacing:0.6px">1</span>.<span style="letter-spacing:0.6px">00</span></div>
<div class="t" style="left:463.6px;width:1500px;text-align:right;top:1521.7px;font-size:24.0px;font-weight:400;color:#e2e2e2;"><span style="margin:0 1.5px">-</span><span style="letter-spacing:0.6px">0</span>.<span style="letter-spacing:0.6px">02</span></div>
<div class="t" style="left:563.6px;width:1500px;text-align:right;top:1521.7px;font-size:24.0px;font-weight:400;color:#e2e2e2;"><span style="letter-spacing:0.6px">0</span>.<span style="letter-spacing:0.6px">00</span></div>
<div class="t" style="left:763.1px;width:1500px;text-align:right;top:1521.7px;font-size:24.0px;font-weight:400;color:#e2e2e2;"><span style="margin:0 1.5px">-</span><span style="letter-spacing:0.6px">0</span>.<span style="letter-spacing:0.6px">02</span></div>
<div class="t" style="left:963.6px;width:1500px;text-align:right;top:1521.7px;font-size:24.0px;font-weight:400;color:#e2e2e2;"><span style="letter-spacing:0.6px">3009</span></div>
<div class="r" style="left:575px;top:1830px;width:2567px;height:2px;background:#6b6b6b;"></div>
<div class="t" style="left:357.3px;width:3000px;text-align:center;top:1843.7px;font-size:24.2px;font-weight:400;color:#e6e6e6;"><span style="letter-spacing:0.6px">1</span> <span style="letter-spacing:0.55px">von</span> <span style="letter-spacing:0.6px">58</span> <span style="letter-spacing:0.55px">ausgewählt</span></div>
<div class="r" style="left:112px;top:132px;width:3030px;height:1px;background:#0c0c0c;"></div>
<div class="r" style="left:112px;top:76px;width:3030px;height:1802px;background:transparent;border-radius:20px;box-shadow:0 0 0 1.5px #6e6e6e inset;"></div>
</body></html>
